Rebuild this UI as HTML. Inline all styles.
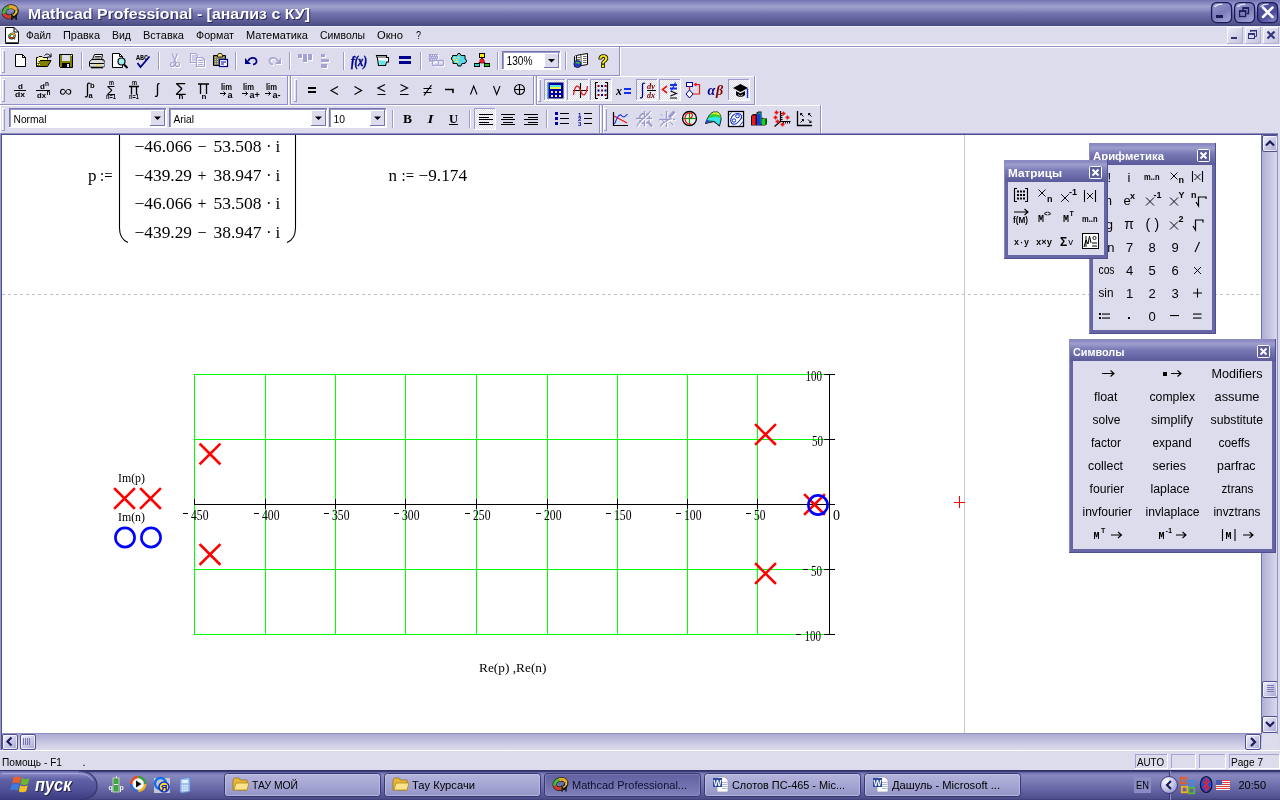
<!DOCTYPE html>
<html lang="ru"><head><meta charset="utf-8"><title>Mathcad Professional - [анализ с КУ]</title>
<style>
html,body{margin:0;padding:0;width:1280px;height:800px;overflow:hidden;background:#DCDCEC;font-family:'Liberation Sans', sans-serif;}
svg{display:block;position:absolute;left:0;top:0;will-change:transform}
text{white-space:pre}
</style></head><body>
<svg width="1280" height="800" viewBox="0 0 1280 800">
<defs>
<linearGradient id="gTitle" x1="0" y1="0" x2="0" y2="1">
<stop offset="0" stop-color="#7272B2"/><stop offset="0.10" stop-color="#8686C0"/>
<stop offset="0.25" stop-color="#A0A0CC"/><stop offset="0.36" stop-color="#9292C4"/>
<stop offset="0.50" stop-color="#7676B2"/><stop offset="0.70" stop-color="#6464A0"/>
<stop offset="0.90" stop-color="#54548C"/><stop offset="1" stop-color="#484880"/></linearGradient>
<linearGradient id="gCap" x1="0" y1="0" x2="0.6" y2="1"><stop offset="0" stop-color="#B4B4E0"/><stop offset="0.25" stop-color="#8C8CC6"/><stop offset="0.6" stop-color="#7C7CBA"/><stop offset="1" stop-color="#9C9CD0"/></linearGradient>
<linearGradient id="gCapX" x1="0" y1="0" x2="0.6" y2="1"><stop offset="0" stop-color="#9090CC"/><stop offset="0.3" stop-color="#5050A0"/><stop offset="0.7" stop-color="#4C4C98"/><stop offset="1" stop-color="#7878BC"/></linearGradient>
<linearGradient id="gMdi" x1="0" y1="0" x2="1" y2="1"><stop offset="0" stop-color="#ECECF6"/><stop offset="1" stop-color="#C0C0DE"/></linearGradient>
<pattern id="dith" width="2" height="2" patternUnits="userSpaceOnUse"><rect width="2" height="2" fill="#DCDCEC"/><rect width="1" height="1" fill="#FFFFFF"/><rect x="1" y="1" width="1" height="1" fill="#FFFFFF"/></pattern>
<linearGradient id="gHTrack" x1="0" y1="0" x2="0" y2="1"><stop offset="0" stop-color="#A8A8D2"/><stop offset="0.5" stop-color="#C4C4E0"/><stop offset="1" stop-color="#DCDCEE"/></linearGradient>
<linearGradient id="gVTrack" x1="0" y1="0" x2="1" y2="0"><stop offset="0" stop-color="#ACACD4"/><stop offset="0.5" stop-color="#C4C4E0"/><stop offset="1" stop-color="#DCDCEE"/></linearGradient>
<linearGradient id="gBtn" x1="0" y1="0" x2="1" y2="1"><stop offset="0" stop-color="#F4F4FC"/><stop offset="0.5" stop-color="#CCCCE6"/><stop offset="1" stop-color="#A4A4D0"/></linearGradient>
<linearGradient id="gTask" x1="0" y1="0" x2="0" y2="1"><stop offset="0" stop-color="#2E2E64"/><stop offset="0.05" stop-color="#3A3A74"/><stop offset="0.09" stop-color="#7070B0"/><stop offset="0.17" stop-color="#8888C0"/><stop offset="0.35" stop-color="#7C7CB6"/><stop offset="0.7" stop-color="#6262A2"/><stop offset="0.95" stop-color="#4E4E8C"/><stop offset="1" stop-color="#3C3C74"/></linearGradient>
<linearGradient id="gTBtn" x1="0" y1="0" x2="0" y2="1"><stop offset="0" stop-color="#B4B4DC"/><stop offset="0.5" stop-color="#A6A6D4"/><stop offset="1" stop-color="#9292C6"/></linearGradient>
<linearGradient id="gTBtnA" x1="0" y1="0" x2="0" y2="1"><stop offset="0" stop-color="#6060A0"/><stop offset="0.5" stop-color="#7070AE"/><stop offset="1" stop-color="#8080BA"/></linearGradient>
<linearGradient id="gStart" x1="0" y1="0" x2="0" y2="1"><stop offset="0" stop-color="#6C6CB0"/><stop offset="0.12" stop-color="#8282C0"/><stop offset="0.3" stop-color="#6060A6"/><stop offset="0.7" stop-color="#4E4E96"/><stop offset="1" stop-color="#3A3A7E"/></linearGradient>
<radialGradient id="gRound" cx="0.35" cy="0.3" r="0.8"><stop offset="0" stop-color="#FFFFFF"/><stop offset="0.6" stop-color="#C0C0E4"/><stop offset="1" stop-color="#8888C4"/></radialGradient>
<linearGradient id="gPalT" x1="0" y1="0" x2="0" y2="1"><stop offset="0" stop-color="#8686C0"/><stop offset="0.18" stop-color="#9E9ECE"/><stop offset="0.45" stop-color="#7A7AB6"/><stop offset="1" stop-color="#5A5A9A"/></linearGradient>
</defs>
<rect x="0" y="0" width="1280" height="800" fill="#DCDCEC" />
<rect x="0" y="0" width="1280" height="26" fill="url(#gTitle)" />
<text x="29" y="20" font-family="'Liberation Sans', sans-serif" font-size="14" font-weight="bold" font-style="normal" fill="#2A2A5C" text-anchor="start" textLength="282" lengthAdjust="spacingAndGlyphs" >Mathcad Professional - [анализ с КУ]</text>
<text x="28" y="19" font-family="'Liberation Sans', sans-serif" font-size="14" font-weight="bold" font-style="normal" fill="#FFFFFF" text-anchor="start" textLength="282" lengthAdjust="spacingAndGlyphs" >Mathcad Professional - [анализ с КУ]</text>
<rect x="0" y="26" width="1280" height="1" fill="#ECECF6" />
<text x="26" y="39" font-family="'Liberation Sans', sans-serif" font-size="11" font-weight="normal" font-style="normal" fill="#000" text-anchor="start" textLength="25" lengthAdjust="spacingAndGlyphs" >Файл</text>
<text x="63" y="39" font-family="'Liberation Sans', sans-serif" font-size="11" font-weight="normal" font-style="normal" fill="#000" text-anchor="start" textLength="37" lengthAdjust="spacingAndGlyphs" >Правка</text>
<text x="112" y="39" font-family="'Liberation Sans', sans-serif" font-size="11" font-weight="normal" font-style="normal" fill="#000" text-anchor="start" textLength="19" lengthAdjust="spacingAndGlyphs" >Вид</text>
<text x="143" y="39" font-family="'Liberation Sans', sans-serif" font-size="11" font-weight="normal" font-style="normal" fill="#000" text-anchor="start" textLength="41" lengthAdjust="spacingAndGlyphs" >Вставка</text>
<text x="196" y="39" font-family="'Liberation Sans', sans-serif" font-size="11" font-weight="normal" font-style="normal" fill="#000" text-anchor="start" textLength="38" lengthAdjust="spacingAndGlyphs" >Формат</text>
<text x="246" y="39" font-family="'Liberation Sans', sans-serif" font-size="11" font-weight="normal" font-style="normal" fill="#000" text-anchor="start" textLength="62" lengthAdjust="spacingAndGlyphs" >Математика</text>
<text x="320" y="39" font-family="'Liberation Sans', sans-serif" font-size="11" font-weight="normal" font-style="normal" fill="#000" text-anchor="start" textLength="45" lengthAdjust="spacingAndGlyphs" >Символы</text>
<text x="377" y="39" font-family="'Liberation Sans', sans-serif" font-size="11" font-weight="normal" font-style="normal" fill="#000" text-anchor="start" textLength="26" lengthAdjust="spacingAndGlyphs" >Окно</text>
<text x="416" y="39" font-family="'Liberation Sans', sans-serif" font-size="11" font-weight="normal" font-style="normal" fill="#000" text-anchor="start" textLength="5" lengthAdjust="spacingAndGlyphs" >?</text>
<rect x="0" y="44" width="1280" height="1" fill="#F4F4FA" />
<rect x="0" y="45" width="1280" height="1" fill="#FFFFFF" />
<rect x="0" y="46" width="1280" height="1" fill="#9090C4" />
<rect x="0" y="47" width="1280" height="1" fill="#FFFFFF" />
<rect x="0" y="47" width="619" height="1" fill="#FFFFFF" />
<rect x="0" y="47" width="1" height="28" fill="#FFFFFF" />
<rect x="0" y="75" width="620" height="1" fill="#9090C4" />
<rect x="619" y="47" width="1" height="28" fill="#9090C4" />
<rect x="620" y="47" width="1" height="29" fill="#FFFFFF" />
<rect x="2" y="50" width="1" height="23" fill="#FFFFFF" />
<rect x="3" y="50" width="1" height="23" fill="#DCDCEC" />
<rect x="4" y="50" width="1" height="23" fill="#9C9CCC" />
<rect x="2" y="50" width="3" height="1" fill="#FFFFFF" />
<rect x="2" y="72" width="3" height="1" fill="#9C9CCC" />
<rect x="0" y="76" width="287" height="1" fill="#FFFFFF" />
<rect x="0" y="76" width="1" height="28" fill="#FFFFFF" />
<rect x="0" y="104" width="288" height="1" fill="#9090C4" />
<rect x="287" y="76" width="1" height="28" fill="#9090C4" />
<rect x="288" y="76" width="1" height="29" fill="#FFFFFF" />
<rect x="2" y="79" width="1" height="23" fill="#FFFFFF" />
<rect x="3" y="79" width="1" height="23" fill="#DCDCEC" />
<rect x="4" y="79" width="1" height="23" fill="#9C9CCC" />
<rect x="2" y="79" width="3" height="1" fill="#FFFFFF" />
<rect x="2" y="101" width="3" height="1" fill="#9C9CCC" />
<rect x="290" y="76" width="243" height="1" fill="#FFFFFF" />
<rect x="290" y="76" width="1" height="28" fill="#9090C4" />
<rect x="291" y="76" width="1" height="28" fill="#FFFFFF" />
<rect x="290" y="104" width="244" height="1" fill="#9090C4" />
<rect x="533" y="76" width="1" height="28" fill="#9090C4" />
<rect x="534" y="76" width="1" height="29" fill="#FFFFFF" />
<rect x="294" y="79" width="1" height="23" fill="#FFFFFF" />
<rect x="295" y="79" width="1" height="23" fill="#DCDCEC" />
<rect x="296" y="79" width="1" height="23" fill="#9C9CCC" />
<rect x="294" y="79" width="3" height="1" fill="#FFFFFF" />
<rect x="294" y="101" width="3" height="1" fill="#9C9CCC" />
<rect x="536" y="76" width="218" height="1" fill="#FFFFFF" />
<rect x="536" y="76" width="1" height="28" fill="#9090C4" />
<rect x="537" y="76" width="1" height="28" fill="#FFFFFF" />
<rect x="536" y="104" width="219" height="1" fill="#9090C4" />
<rect x="754" y="76" width="1" height="28" fill="#9090C4" />
<rect x="755" y="76" width="1" height="29" fill="#FFFFFF" />
<rect x="538" y="79" width="1" height="23" fill="#FFFFFF" />
<rect x="539" y="79" width="1" height="23" fill="#DCDCEC" />
<rect x="540" y="79" width="1" height="23" fill="#9C9CCC" />
<rect x="538" y="79" width="3" height="1" fill="#FFFFFF" />
<rect x="538" y="101" width="3" height="1" fill="#9C9CCC" />
<rect x="0" y="105" width="599" height="1" fill="#FFFFFF" />
<rect x="0" y="105" width="1" height="28" fill="#FFFFFF" />
<rect x="0" y="133" width="600" height="1" fill="#9090C4" />
<rect x="599" y="105" width="1" height="28" fill="#9090C4" />
<rect x="600" y="105" width="1" height="29" fill="#FFFFFF" />
<rect x="2" y="108" width="1" height="23" fill="#FFFFFF" />
<rect x="3" y="108" width="1" height="23" fill="#DCDCEC" />
<rect x="4" y="108" width="1" height="23" fill="#9C9CCC" />
<rect x="2" y="108" width="3" height="1" fill="#FFFFFF" />
<rect x="2" y="130" width="3" height="1" fill="#9C9CCC" />
<rect x="602" y="105" width="218" height="1" fill="#FFFFFF" />
<rect x="602" y="105" width="1" height="28" fill="#9090C4" />
<rect x="603" y="105" width="1" height="28" fill="#FFFFFF" />
<rect x="602" y="133" width="219" height="1" fill="#9090C4" />
<rect x="820" y="105" width="1" height="28" fill="#9090C4" />
<rect x="821" y="105" width="1" height="29" fill="#FFFFFF" />
<rect x="604" y="108" width="1" height="23" fill="#FFFFFF" />
<rect x="605" y="108" width="1" height="23" fill="#DCDCEC" />
<rect x="606" y="108" width="1" height="23" fill="#9C9CCC" />
<rect x="604" y="108" width="3" height="1" fill="#FFFFFF" />
<rect x="604" y="130" width="3" height="1" fill="#9C9CCC" />
<rect x="0" y="133" width="1278" height="1" fill="#8C8CC0" />
<rect x="0" y="134" width="1278" height="1" fill="#50508C" />
<rect x="81" y="52" width="1" height="18" fill="#9C9CCC" />
<rect x="82" y="52" width="1" height="18" fill="#FFFFFF" />
<rect x="158" y="52" width="1" height="18" fill="#9C9CCC" />
<rect x="159" y="52" width="1" height="18" fill="#FFFFFF" />
<rect x="235" y="52" width="1" height="18" fill="#9C9CCC" />
<rect x="236" y="52" width="1" height="18" fill="#FFFFFF" />
<rect x="289" y="52" width="1" height="18" fill="#9C9CCC" />
<rect x="290" y="52" width="1" height="18" fill="#FFFFFF" />
<rect x="343" y="52" width="1" height="18" fill="#9C9CCC" />
<rect x="344" y="52" width="1" height="18" fill="#FFFFFF" />
<rect x="420" y="52" width="1" height="18" fill="#9C9CCC" />
<rect x="421" y="52" width="1" height="18" fill="#FFFFFF" />
<rect x="497" y="52" width="1" height="18" fill="#9C9CCC" />
<rect x="498" y="52" width="1" height="18" fill="#FFFFFF" />
<rect x="565" y="52" width="1" height="18" fill="#9C9CCC" />
<rect x="566" y="52" width="1" height="18" fill="#FFFFFF" />
<rect x="392" y="110" width="1" height="18" fill="#9C9CCC" />
<rect x="393" y="110" width="1" height="18" fill="#FFFFFF" />
<rect x="469" y="110" width="1" height="18" fill="#9C9CCC" />
<rect x="470" y="110" width="1" height="18" fill="#FFFFFF" />
<rect x="546" y="110" width="1" height="18" fill="#9C9CCC" />
<rect x="547" y="110" width="1" height="18" fill="#FFFFFF" />
<rect x="2" y="135" width="1259" height="599" fill="#FFFFFF" />
<rect x="0" y="134" width="1" height="617" fill="#9898C8" />
<rect x="1" y="134" width="1" height="617" fill="#50508C" />
<rect x="964" y="135" width="1" height="599" fill="#C8C8C8" />
<rect x="1211.6" y="2.6" width="20" height="20" rx="5" fill="url(#gCap)" stroke="#1A1A58" stroke-width="1.3"/>
<path d="M1215 6.500C1217 4.500 1220 4.200 1222 4.200" fill="none" stroke="#FFFFFF" stroke-opacity="0.8" stroke-width="1.2" stroke-linecap="round"/>
<rect x="1234.6" y="2.6" width="20" height="20" rx="5" fill="url(#gCap)" stroke="#1A1A58" stroke-width="1.3"/>
<path d="M1238 6.500C1240 4.500 1243 4.200 1245 4.200" fill="none" stroke="#FFFFFF" stroke-opacity="0.8" stroke-width="1.2" stroke-linecap="round"/>
<rect x="1257.6" y="2.6" width="20" height="20" rx="5" fill="url(#gCapX)" stroke="#1A1A58" stroke-width="1.3"/>
<path d="M1261 6.500C1263 4.500 1266 4.200 1268 4.200" fill="none" stroke="#FFFFFF" stroke-opacity="0.8" stroke-width="1.2" stroke-linecap="round"/>
<rect x="1216" y="15" width="7" height="3" fill="#1A1A58" />
<path d="M1243 10V8H1248.500V13.500H1246.500" fill="none" stroke="#1A1A58" stroke-width="1.3" />
<rect x="1242.5" y="7.3" width="6.5" height="1.4" fill="#1A1A58" />
<rect x="1239.600" y="11" width="6" height="5.500" fill="none" stroke="#1A1A58" stroke-width="1.3"/>
<rect x="1239" y="10.3" width="7.3" height="1.5" fill="#1A1A58" />
<path d="M1263 7.500L1272.500 17M1272.500 7.500L1263 17" fill="none" stroke="#FFFFFF" stroke-width="2.5" stroke-linecap="round"/>
<rect x="1227" y="27" width="16" height="17" fill="url(#gMdi)" />
<rect x="1227" y="27" width="16" height="1" fill="#F8F8FC" />
<rect x="1227" y="27" width="1" height="17" fill="#F8F8FC" />
<rect x="1227" y="43" width="16" height="1" fill="#B0B0D4" />
<rect x="1242" y="27" width="1" height="17" fill="#B0B0D4" />
<rect x="1245" y="27" width="16" height="17" fill="url(#gMdi)" />
<rect x="1245" y="27" width="16" height="1" fill="#F8F8FC" />
<rect x="1245" y="27" width="1" height="17" fill="#F8F8FC" />
<rect x="1245" y="43" width="16" height="1" fill="#B0B0D4" />
<rect x="1260" y="27" width="1" height="17" fill="#B0B0D4" />
<rect x="1263" y="27" width="16" height="17" fill="url(#gMdi)" />
<rect x="1263" y="27" width="16" height="1" fill="#F8F8FC" />
<rect x="1263" y="27" width="1" height="17" fill="#F8F8FC" />
<rect x="1263" y="43" width="16" height="1" fill="#B0B0D4" />
<rect x="1278" y="27" width="1" height="17" fill="#B0B0D4" />
<rect x="1231" y="37" width="6" height="2" fill="#34347A" />
<rect x="1248.500" y="33.500" width="6" height="5" fill="none" stroke="#34347A" stroke-width="1"/>
<rect x="1248" y="33" width="7" height="2" fill="#34347A" />
<path d="M1250.500 32V30.500H1256.500V36.500H1255" fill="none" stroke="#34347A" stroke-width="1" />
<rect x="1250" y="30" width="7" height="1.5" fill="#34347A" />
<path d="M1267.500 31.500L1274.500 38.500M1274.500 31.500L1267.500 38.500" fill="none" stroke="#34347A" stroke-width="2.2" />
<g transform="translate(10.2 11.8) scale(1.08) rotate(-18)"><ellipse cx="0" cy="0" rx="5.900" ry="4.600" fill="none" stroke="#181818" stroke-width="4.400"/><path d="M-5.900 0A5.900 4.600 0 0 1 0 -4.600" fill="none" stroke="#48B83C" stroke-width="3.200"/><path d="M0 -4.600A5.900 4.600 0 0 1 5.900 0" fill="none" stroke="#E8A828" stroke-width="3.200"/><path d="M-5.900 0A5.900 4.600 0 0 0 -1 4.550" fill="none" stroke="#D83828" stroke-width="3.200"/><path d="M-1 4.550A5.900 4.600 0 0 0 2.500 4.200" fill="none" stroke="#E8D030" stroke-width="3.200"/><path d="M2.500 4.200A5.900 4.600 0 0 0 5.900 0" fill="none" stroke="#D8C040" stroke-width="2"/></g>
<g transform="translate(10.2 11.8) scale(1.08)"><path d="M1.500 7.500V3L3.500 5.500L5.500 3V7.500" fill="none" stroke="#101010" stroke-width="1.400"/></g>
<path d="M5.500 27.500H14L18.500 32V43.500H5.500Z" fill="#FFFFFF" stroke="#000" stroke-width="1" />
<path d="M14 27.500V32H18.500" fill="none" stroke="#000" stroke-width="1" />
<rect x="5" y="42" width="14" height="1" fill="#505050" />
<g transform="translate(12 36) scale(0.48) rotate(-18)"><ellipse cx="0" cy="0" rx="5.900" ry="4.600" fill="none" stroke="#181818" stroke-width="4.400"/><path d="M-5.900 0A5.900 4.600 0 0 1 0 -4.600" fill="none" stroke="#48B83C" stroke-width="3.200"/><path d="M0 -4.600A5.900 4.600 0 0 1 5.900 0" fill="none" stroke="#E8A828" stroke-width="3.200"/><path d="M-5.900 0A5.900 4.600 0 0 0 -1 4.550" fill="none" stroke="#D83828" stroke-width="3.200"/><path d="M-1 4.550A5.900 4.600 0 0 0 2.500 4.200" fill="none" stroke="#E8D030" stroke-width="3.200"/><path d="M2.500 4.200A5.900 4.600 0 0 0 5.900 0" fill="none" stroke="#D8C040" stroke-width="2"/></g>
<g transform="translate(12 36) scale(0.48)"><path d="M1.500 7.500V3L3.500 5.500L5.500 3V7.500" fill="none" stroke="#101010" stroke-width="1.400"/></g>
<path d="M15.500 54.500H22.500L25.500 57.500V66.500H15.500Z" fill="#FFFFFF" stroke="#000" stroke-width="1" />
<path d="M22.500 54.500V57.500H25.500" fill="none" stroke="#000" stroke-width="1" />
<path d="M36.500 66.500V57.500H38L39 56.500H42L43 57.500H47.500V59.500" fill="#FFFF9C" stroke="#000" stroke-width="1" />
<path d="M36.500 66.500L39.500 60.500H51L47.500 66.500Z" fill="#808000" stroke="#000" stroke-width="1" />
<rect x="38" y="58" width="1" height="1" fill="#FFFFFF" />
<rect x="37" y="60" width="1" height="1" fill="#FFFFFF" />
<rect x="39" y="60" width="1" height="1" fill="#FFFFFF" />
<rect x="38" y="62" width="1" height="1" fill="#FFFFFF" />
<rect x="37" y="64" width="1" height="1" fill="#FFFFFF" />
<rect x="39" y="64" width="1" height="1" fill="#FFFFFF" />
<path d="M44.500 55.500C46 53.500 49 53.500 50.500 56.500" fill="none" stroke="#000" stroke-width="1" />
<path d="M51 53.500V57H47.500" fill="none" stroke="#000" stroke-width="1" />
<path d="M59.500 54.500H72.500V67.500H60.500L59.500 66.500Z" fill="#808000" stroke="#000" stroke-width="1" />
<rect x="62" y="55" width="8" height="6" fill="#DCDCEC" />
<rect x="62" y="63" width="8" height="4" fill="#000000" />
<rect x="67" y="64" width="2" height="3" fill="#DCDCEC" />
<rect x="71" y="55" width="1" height="1" fill="#FFFFFF" />
<path d="M92.500 59.500L94.500 54.500H102.500L101.500 59.500" fill="#FFFFFF" stroke="#000" stroke-width="1" />
<path d="M95 56.500H101M94.500 58H100.500" fill="none" stroke="#000" stroke-width="0.8" />
<path d="M89.500 61.500L92 59.500H103.500L104.500 61.500V66L103 67.500H91L89.500 66Z" fill="#DCDCDC" stroke="#000" stroke-width="1" />
<path d="M89.500 63.500H104.500" fill="none" stroke="#000" stroke-width="1" />
<rect x="96" y="64.5" width="4" height="1" fill="#F0E000" />
<path d="M91 67.500H103" fill="none" stroke="#000" stroke-width="1.6" />
<path d="M102 60L104.500 62V66" fill="none" stroke="#808080" stroke-width="1" />
<path d="M112.500 53.500H119.500L122.500 56.500V67.500H112.500Z" fill="#FFFFFF" stroke="#000" stroke-width="1" />
<path d="M119.500 53.500V56.500H122.500" fill="none" stroke="#000" stroke-width="1" />
<circle cx="121.500" cy="61.500" r="3.500" fill="#9CF0F0" stroke="#000" stroke-width="1.2"/>
<path d="M124 64.500L127.500 68" fill="none" stroke="#000" stroke-width="2" />
<text x="136" y="59.5" font-family="'Liberation Mono', monospace" font-size="6.5" font-weight="bold" font-style="normal" fill="#000" text-anchor="start" textLength="12" lengthAdjust="spacingAndGlyphs" >ABC</text>
<path d="M137.500 63L140.500 67L149.500 56.500" fill="none" stroke="#00008C" stroke-width="1.8" />
<path d="M172 53.500L176 63M177.500 53.500L173.500 63" transform="translate(1 1)" fill="none" stroke="#FFFFFF" stroke-width="1.2"/>
<path d="M172 53.500L176 63M177.500 53.500L173.500 63" fill="none" stroke="#A4A4D4" stroke-width="1.2"/>
<circle cx="172.500" cy="64.500" r="2" fill="none" stroke="#FFFFFF" stroke-width="1.2" transform="translate(1 1)"/><circle cx="177.500" cy="64.500" r="2" fill="none" stroke="#FFFFFF" stroke-width="1.2" transform="translate(1 1)"/>
<circle cx="172.500" cy="64.500" r="2" fill="none" stroke="#A4A4D4" stroke-width="1.2"/><circle cx="177.500" cy="64.500" r="2" fill="none" stroke="#A4A4D4" stroke-width="1.2"/>
<path d="M190.500 53.500H195.500L197.500 55.500V62.500H190.500Z" transform="translate(1 1)" fill="none" stroke="#FFFFFF" stroke-width="1.2"/>
<path d="M190.500 53.500H195.500L197.500 55.500V62.500H190.500Z" fill="none" stroke="#A4A4D4" stroke-width="1.2"/>
<path d="M192 56H196M192 58H196M192 60H196" transform="translate(1 1)" fill="none" stroke="#FFFFFF" stroke-width="0.8"/>
<path d="M192 56H196M192 58H196M192 60H196" fill="none" stroke="#A4A4D4" stroke-width="0.8"/>
<path d="M196.500 57.500H202.500L204.500 59.500V66.500H196.500Z" transform="translate(1 1)" fill="none" stroke="#FFFFFF" stroke-width="1.2"/>
<path d="M196.500 57.500H202.500L204.500 59.500V66.500H196.500Z" fill="none" stroke="#A4A4D4" stroke-width="1.2"/>
<path d="M198 60.500H203M198 62.500H203M198 64.500H203" transform="translate(1 1)" fill="none" stroke="#FFFFFF" stroke-width="0.8"/>
<path d="M198 60.500H203M198 62.500H203M198 64.500H203" fill="none" stroke="#A4A4D4" stroke-width="0.8"/>
<path d="M213.500 55.500H225.500V65.500H213.500Z" fill="#808060" stroke="#000" stroke-width="1" />
<rect x="215" y="57" width="1" height="1" fill="#C8C880" />
<rect x="217" y="57" width="1" height="1" fill="#C8C880" />
<rect x="219" y="57" width="1" height="1" fill="#C8C880" />
<rect x="221" y="57" width="1" height="1" fill="#C8C880" />
<rect x="223" y="57" width="1" height="1" fill="#C8C880" />
<rect x="215" y="59" width="1" height="1" fill="#C8C880" />
<rect x="217" y="59" width="1" height="1" fill="#C8C880" />
<rect x="219" y="59" width="1" height="1" fill="#C8C880" />
<rect x="221" y="59" width="1" height="1" fill="#C8C880" />
<rect x="223" y="59" width="1" height="1" fill="#C8C880" />
<rect x="215" y="61" width="1" height="1" fill="#C8C880" />
<rect x="217" y="61" width="1" height="1" fill="#C8C880" />
<rect x="219" y="61" width="1" height="1" fill="#C8C880" />
<rect x="221" y="61" width="1" height="1" fill="#C8C880" />
<rect x="223" y="61" width="1" height="1" fill="#C8C880" />
<rect x="215" y="63" width="1" height="1" fill="#C8C880" />
<rect x="217" y="63" width="1" height="1" fill="#C8C880" />
<rect x="219" y="63" width="1" height="1" fill="#C8C880" />
<rect x="221" y="63" width="1" height="1" fill="#C8C880" />
<rect x="223" y="63" width="1" height="1" fill="#C8C880" />
<path d="M217.500 55.500L218.500 53.500H221.500L222.500 55.500V57H217.500Z" fill="#F8E060" stroke="#000" stroke-width="0.8" />
<rect x="219.5" y="59.5" width="8" height="7" fill="#FFFFFF" stroke="#00008C" stroke-width="1.2"/>
<path d="M221 62H226M221 64H224" fill="none" stroke="#00008C" stroke-width="1.2" />
<path d="M248.500 61C249 57.500 255.500 56.500 256.500 60.500C257 63 255 64.500 253 64.500" fill="none" stroke="#00008C" stroke-width="1.7" />
<path d="M245 58V64H251Z" fill="#00008C" stroke="none" stroke-width="1" />
<path d="M277.500 61C277 57.500 270.500 56.500 269.500 60.500C269 63 271 64.500 273 64.500" transform="translate(1 1)" fill="none" stroke="#FFFFFF" stroke-width="1.6"/>
<path d="M277.500 61C277 57.500 270.500 56.500 269.500 60.500C269 63 271 64.500 273 64.500" fill="none" stroke="#A4A4D4" stroke-width="1.6"/>
<path d="M281 58V64H275Z" fill="#FFFFFF" transform="translate(1 1)"/><path d="M281 58V64H275Z" fill="#A4A4D4"/>
<rect x="299" y="55" width="4" height="4" fill="#FFFFFF" />
<rect x="298" y="54" width="4" height="4" fill="#A4A4D4" />
<rect x="304" y="55" width="4" height="8" fill="#FFFFFF" />
<rect x="303" y="54" width="4" height="8" fill="#A4A4D4" />
<rect x="309" y="55" width="4" height="6" fill="#FFFFFF" />
<rect x="308" y="54" width="4" height="6" fill="#A4A4D4" />
<rect x="322" y="55" width="4" height="3" fill="#FFFFFF" />
<rect x="321" y="54" width="4" height="3" fill="#A4A4D4" />
<rect x="322" y="60" width="8" height="3" fill="#FFFFFF" />
<rect x="321" y="59" width="8" height="3" fill="#A4A4D4" />
<rect x="322" y="65" width="6" height="4" fill="#FFFFFF" />
<rect x="321" y="64" width="6" height="4" fill="#A4A4D4" />
<text x="351" y="65.5" font-family="'Liberation Serif', serif" font-size="14" font-weight="bold" font-style="italic" fill="#00008C" text-anchor="start" textLength="16" lengthAdjust="spacingAndGlyphs" stroke="#00008C" stroke-width="0.5">f(x)</text>
<path d="M376.500 55.500H386.500V57.500H388.500V62H386.500L385.500 65.500H378.500L377.500 58.500Z" fill="#FFFFFF" stroke="#000" stroke-width="1.1" />
<path d="M379 60.500H385.500L385 65H379.500Z" fill="#60E8E8" stroke="none" stroke-width="1" />
<path d="M378 57H386" fill="none" stroke="#000" stroke-width="0.8" />
<rect x="399" y="56" width="12" height="3" fill="#00008C" />
<rect x="399" y="61" width="12" height="3" fill="#00008C" />
<rect x="430" y="55" width="9" height="8" fill="#FFFFFF" />
<rect x="429" y="54" width="9" height="8" fill="#A4A4D4" />
<rect x="431" y="55" width="1" height="1" fill="#E4E4F4" />
<rect x="433" y="55" width="1" height="1" fill="#E4E4F4" />
<rect x="435" y="55" width="1" height="1" fill="#E4E4F4" />
<rect x="437" y="55" width="1" height="1" fill="#E4E4F4" />
<rect x="430" y="57" width="1" height="1" fill="#E4E4F4" />
<rect x="432" y="57" width="1" height="1" fill="#E4E4F4" />
<rect x="434" y="57" width="1" height="1" fill="#E4E4F4" />
<rect x="436" y="57" width="1" height="1" fill="#E4E4F4" />
<rect x="431" y="59" width="1" height="1" fill="#E4E4F4" />
<rect x="433" y="59" width="1" height="1" fill="#E4E4F4" />
<rect x="435" y="59" width="1" height="1" fill="#E4E4F4" />
<rect x="437" y="59" width="1" height="1" fill="#E4E4F4" />
<rect x="430" y="61" width="1" height="1" fill="#E4E4F4" />
<rect x="432" y="61" width="1" height="1" fill="#E4E4F4" />
<rect x="434" y="61" width="1" height="1" fill="#E4E4F4" />
<rect x="436" y="61" width="1" height="1" fill="#E4E4F4" />
<path d="M433.500 60.500H437.500C439 60.500 439 65.500 437.500 65.500H433.500C432 65.500 432 60.500 433.500 60.500Z" transform="translate(1 1)" fill="none" stroke="#FFFFFF" stroke-width="1.3"/>
<path d="M433.500 60.500H437.500C439 60.500 439 65.500 437.500 65.500H433.500C432 65.500 432 60.500 433.500 60.500Z" fill="none" stroke="#A4A4D4" stroke-width="1.3"/>
<path d="M438.500 60.500H442.500C444 60.500 444 65.500 442.500 65.500H438.500" transform="translate(1 1)" fill="none" stroke="#FFFFFF" stroke-width="1.3"/>
<path d="M438.500 60.500H442.500C444 60.500 444 65.500 442.500 65.500H438.500" fill="none" stroke="#A4A4D4" stroke-width="1.3"/>
<path d="M452.500 55.500H457L458 53.500H460L461 55.500H465V59L466.500 60V62L465 62.500V63.500H462L461 66H458L457 63.500H453V60.500L451.500 59.500V57.500L452.500 57Z" fill="#58D8E8" stroke="#000" stroke-width="1" />
<rect x="454" y="57" width="1.5" height="1.5" fill="#F8F060" />
<rect x="456" y="59" width="1.5" height="1.5" fill="#F8F060" />
<rect x="455" y="61" width="1.5" height="1.5" fill="#F8F060" />
<rect x="458" y="57" width="1.5" height="1.5" fill="#F8F060" />
<rect x="453" y="59" width="1.5" height="1.5" fill="#F8F060" />
<rect x="457" y="61" width="1.5" height="1.5" fill="#F8F060" />
<path d="M482 57V61M482 61L477 65M482 61L487 65" fill="none" stroke="#000" stroke-width="1.5" />
<rect x="479.5" y="53.5" width="5" height="4" fill="#F8F000" stroke="#000" stroke-width="1"/>
<circle cx="482" cy="61" r="2.300" fill="#F02020" stroke="#800000" stroke-width="0.6"/>
<rect x="474.5" y="63.5" width="5" height="3" fill="#00E0E0" stroke="#000" stroke-width="1"/>
<rect x="484.5" y="63.5" width="5" height="3" fill="#00D000" stroke="#000" stroke-width="1"/>
<rect x="502" y="51" width="59" height="19" fill="#FFFFFF" />
<rect x="502" y="51" width="59" height="1" fill="#7474AE" />
<rect x="502" y="51" width="1" height="19" fill="#7474AE" />
<rect x="503" y="52" width="57" height="1" fill="#9C9CCC" />
<rect x="503" y="52" width="1" height="17" fill="#9C9CCC" />
<rect x="502" y="69" width="59" height="1" fill="#FFFFFF" />
<rect x="560" y="51" width="1" height="19" fill="#FFFFFF" />
<rect x="544" y="53" width="15" height="15" fill="#DCDCEC" />
<rect x="544" y="53" width="15" height="1" fill="#FFFFFF" />
<rect x="544" y="53" width="1" height="15" fill="#FFFFFF" />
<rect x="544" y="67" width="15" height="1" fill="#7474AE" />
<rect x="558" y="53" width="1" height="15" fill="#7474AE" />
<path d="M548 59.0H555L551.5 62.5Z" fill="#000" stroke="none" stroke-width="1" />
<text x="506.5" y="64.5" font-family="'Liberation Sans', sans-serif" font-size="12" font-weight="normal" font-style="normal" fill="#000" text-anchor="start" textLength="26" lengthAdjust="spacingAndGlyphs" >130%</text>
<path d="M576.500 55.500L581 54.500L581.500 65.500L577 66.500Z" fill="#FFFFFF" stroke="#000" stroke-width="1" />
<path d="M581.500 54.500L587.500 53.500V64.500L581.500 65.500" fill="#FFFFFF" stroke="#000" stroke-width="1" />
<path d="M583 56.500H586.500M583 58.500H586.500M583 60.500H586.500M583 62.500H586.500" fill="none" stroke="#404040" stroke-width="0.8" />
<path d="M575.500 55.500L574.500 56.500V66.500L577 66.500" fill="none" stroke="#000" stroke-width="1" />
<path d="M577.500 57.500H580M577.500 59.500H580" fill="none" stroke="#404040" stroke-width="0.8" />
<circle cx="577.500" cy="64" r="3.600" fill="#2838C8" stroke="#101040" stroke-width="0.8"/>
<path d="M575.500 63C577 61.500 578.500 64 580 62.500" fill="none" stroke="#30C030" stroke-width="1.4" />
<text x="598.5" y="67" font-family="'Liberation Sans', sans-serif" font-size="16" font-weight="bold" font-style="normal" fill="#F8E800" text-anchor="start" stroke="#000" stroke-width="1.7" paint-order="stroke" stroke-linejoin="round">?</text>
<text x="18" y="89" font-family="'Liberation Sans', sans-serif" font-size="8" font-weight="bold" font-style="normal" fill="#000" text-anchor="start" >d</text>
<rect x="14" y="90" width="12" height="1" fill="#000" />
<text x="15" y="97" font-family="'Liberation Sans', sans-serif" font-size="8" font-weight="bold" font-style="normal" fill="#000" text-anchor="start" textLength="10" lengthAdjust="spacingAndGlyphs" >dx</text>
<text x="40" y="89" font-family="'Liberation Sans', sans-serif" font-size="8" font-weight="bold" font-style="normal" fill="#000" text-anchor="start" >d</text>
<text x="45" y="86" font-family="'Liberation Sans', sans-serif" font-size="6.5" font-weight="bold" font-style="normal" fill="#000" text-anchor="start" >n</text>
<rect x="36" y="90" width="14" height="1" fill="#000" />
<text x="37" y="98" font-family="'Liberation Sans', sans-serif" font-size="8" font-weight="bold" font-style="normal" fill="#000" text-anchor="start" textLength="9" lengthAdjust="spacingAndGlyphs" >dx</text>
<text x="46.5" y="95" font-family="'Liberation Sans', sans-serif" font-size="6.5" font-weight="bold" font-style="normal" fill="#000" text-anchor="start" >n</text>
<text x="59" y="96" font-family="'Liberation Sans', sans-serif" font-size="15" font-weight="normal" font-style="normal" fill="#000" text-anchor="start" textLength="13" lengthAdjust="spacingAndGlyphs" >∞</text>
<path d="M90 83.500C88.500 82.500 87.500 83.500 87.500 85V95C87.500 96.500 86.500 97.500 85 96.500" fill="none" stroke="#000" stroke-width="1.3" />
<text x="90" y="88" font-family="'Liberation Sans', sans-serif" font-size="7.5" font-weight="bold" font-style="normal" fill="#000" text-anchor="start" >b</text>
<text x="88.5" y="98" font-family="'Liberation Sans', sans-serif" font-size="7.5" font-weight="bold" font-style="normal" fill="#000" text-anchor="start" >a</text>
<text x="109" y="85" font-family="'Liberation Sans', sans-serif" font-size="6.5" font-weight="bold" font-style="normal" fill="#000" text-anchor="start" textLength="5" lengthAdjust="spacingAndGlyphs" >m</text>
<text x="106.5" y="95" font-family="'Liberation Sans', sans-serif" font-size="13" font-weight="normal" font-style="normal" fill="#000" text-anchor="start" textLength="9" lengthAdjust="spacingAndGlyphs" >Σ</text>
<text x="106" y="98.5" font-family="'Liberation Sans', sans-serif" font-size="7" font-weight="bold" font-style="normal" fill="#000" text-anchor="start" textLength="10" lengthAdjust="spacingAndGlyphs" >n=1</text>
<text x="132" y="85" font-family="'Liberation Sans', sans-serif" font-size="6.5" font-weight="bold" font-style="normal" fill="#000" text-anchor="start" textLength="5" lengthAdjust="spacingAndGlyphs" >m</text>
<path d="M129 86.500H139M131.500 86.500V94.500M136.500 86.500V94.500" fill="none" stroke="#000" stroke-width="1.3" />
<text x="129" y="98.5" font-family="'Liberation Sans', sans-serif" font-size="7" font-weight="bold" font-style="normal" fill="#000" text-anchor="start" textLength="10" lengthAdjust="spacingAndGlyphs" >n=1</text>
<path d="M159.500 84C158.500 83 157.500 84 157.500 85.500V94.500C157.500 96 156.500 97 155 96" fill="none" stroke="#000" stroke-width="1.3" />
<text x="175" y="95" font-family="'Liberation Sans', sans-serif" font-size="16" font-weight="normal" font-style="normal" fill="#000" text-anchor="start" textLength="11.5" lengthAdjust="spacingAndGlyphs" >Σ</text>
<text x="178.5" y="98.5" font-family="'Liberation Sans', sans-serif" font-size="8" font-weight="bold" font-style="normal" fill="#000" text-anchor="start" >n</text>
<path d="M198 84H209M200.500 84V94M206.500 84V94" fill="none" stroke="#000" stroke-width="1.3" />
<text x="201.5" y="98.5" font-family="'Liberation Sans', sans-serif" font-size="8" font-weight="bold" font-style="normal" fill="#000" text-anchor="start" >n</text>
<text x="221" y="90" font-family="'Liberation Sans', sans-serif" font-size="9.5" font-weight="bold" font-style="normal" fill="#000" text-anchor="start" textLength="11" lengthAdjust="spacingAndGlyphs" >lim</text>
<path d="M220 93.5H225.5M223.5 91.5L225.5 93.5L223.5 95.5" fill="none" stroke="#000" stroke-width="1" />
<text x="227.5" y="97.5" font-family="'Liberation Sans', sans-serif" font-size="9" font-weight="bold" font-style="normal" fill="#000" text-anchor="start" >a</text>
<text x="243" y="90" font-family="'Liberation Sans', sans-serif" font-size="9.5" font-weight="bold" font-style="normal" fill="#000" text-anchor="start" textLength="11" lengthAdjust="spacingAndGlyphs" >lim</text>
<path d="M242 93.5H247.5M245.5 91.5L247.5 93.5L245.5 95.5" fill="none" stroke="#000" stroke-width="1" />
<text x="249.5" y="97.5" font-family="'Liberation Sans', sans-serif" font-size="9" font-weight="bold" font-style="normal" fill="#000" text-anchor="start" >a+</text>
<text x="266" y="90" font-family="'Liberation Sans', sans-serif" font-size="9.5" font-weight="bold" font-style="normal" fill="#000" text-anchor="start" textLength="11" lengthAdjust="spacingAndGlyphs" >lim</text>
<path d="M265 93.5H270.5M268.5 91.5L270.5 93.5L268.5 95.5" fill="none" stroke="#000" stroke-width="1" />
<text x="272.5" y="97.5" font-family="'Liberation Sans', sans-serif" font-size="9" font-weight="bold" font-style="normal" fill="#000" text-anchor="start" >a-</text>
<rect x="308" y="87" width="8" height="2" fill="#000" />
<rect x="308" y="91" width="8" height="2" fill="#000" />
<path d="M338 86.500L331 90.500L338 94.500" fill="none" stroke="#000" stroke-width="1.2" />
<path d="M354.500 86.500L361.500 90.500L354.500 94.500" fill="none" stroke="#000" stroke-width="1.2" />
<path d="M385 84.500L378 88L385 91.500M377.500 94.500H385.500" fill="none" stroke="#000" stroke-width="1.2" />
<path d="M400.500 84.500L407.500 88L400.500 91.500M400 94.500H408.500" fill="none" stroke="#000" stroke-width="1.2" />
<path d="M423.500 88.500H431.500M423.500 92.500H431.500M431.500 85L424 95.500" fill="none" stroke="#000" stroke-width="1.2" />
<path d="M445 89.500H453V93" fill="none" stroke="#000" stroke-width="1.6" />
<path d="M470.500 94.500L473.700 86L477 94.500" fill="none" stroke="#000" stroke-width="1.1" />
<path d="M493.500 86L496.700 94.500L500 86" fill="none" stroke="#000" stroke-width="1.1" />
<circle cx="519.500" cy="89.500" r="5" fill="none" stroke="#000" stroke-width="1.1"/>
<path d="M514.500 89.500H524.500M519.500 84.500V94.500" fill="none" stroke="#000" stroke-width="1.1" />
<rect x="544" y="79" width="22" height="22" fill="url(#dith)" />
<rect x="544" y="79" width="22" height="1" fill="#9C9CCC" />
<rect x="544" y="79" width="1" height="22" fill="#9C9CCC" />
<rect x="544" y="100" width="22" height="1" fill="#FFFFFF" />
<rect x="565" y="79" width="1" height="22" fill="#FFFFFF" />
<rect x="567" y="79" width="22" height="22" fill="url(#dith)" />
<rect x="567" y="79" width="22" height="1" fill="#9C9CCC" />
<rect x="567" y="79" width="1" height="22" fill="#9C9CCC" />
<rect x="567" y="100" width="22" height="1" fill="#FFFFFF" />
<rect x="588" y="79" width="1" height="22" fill="#FFFFFF" />
<rect x="590" y="79" width="22" height="22" fill="url(#dith)" />
<rect x="590" y="79" width="22" height="1" fill="#9C9CCC" />
<rect x="590" y="79" width="1" height="22" fill="#9C9CCC" />
<rect x="590" y="100" width="22" height="1" fill="#FFFFFF" />
<rect x="611" y="79" width="1" height="22" fill="#FFFFFF" />
<rect x="636" y="79" width="22" height="22" fill="url(#dith)" />
<rect x="636" y="79" width="22" height="1" fill="#9C9CCC" />
<rect x="636" y="79" width="1" height="22" fill="#9C9CCC" />
<rect x="636" y="100" width="22" height="1" fill="#FFFFFF" />
<rect x="657" y="79" width="1" height="22" fill="#FFFFFF" />
<rect x="659" y="79" width="22" height="22" fill="url(#dith)" />
<rect x="659" y="79" width="22" height="1" fill="#9C9CCC" />
<rect x="659" y="79" width="1" height="22" fill="#9C9CCC" />
<rect x="659" y="100" width="22" height="1" fill="#FFFFFF" />
<rect x="680" y="79" width="1" height="22" fill="#FFFFFF" />
<rect x="728" y="79" width="22" height="22" fill="url(#dith)" />
<rect x="728" y="79" width="22" height="1" fill="#9C9CCC" />
<rect x="728" y="79" width="1" height="22" fill="#9C9CCC" />
<rect x="728" y="100" width="22" height="1" fill="#FFFFFF" />
<rect x="749" y="79" width="1" height="22" fill="#FFFFFF" />
<rect x="548" y="83" width="15" height="15" fill="#0000B0" stroke="#000060" stroke-width="1"/>
<rect x="547.5" y="83" width="1" height="15" fill="#50E0F0" />
<rect x="550" y="85" width="11" height="2" fill="#50E8E8" />
<rect x="550" y="87" width="11" height="2" fill="#F0F040" />
<rect x="551" y="91" width="2" height="2" fill="#F8F080" />
<rect x="555" y="91" width="2" height="2" fill="#F8F080" />
<rect x="559" y="91" width="2" height="2" fill="#F8F080" />
<rect x="551" y="95" width="2" height="2" fill="#F8F080" />
<rect x="555" y="95" width="2" height="2" fill="#F8F080" />
<rect x="559" y="95" width="2" height="2" fill="#F8F080" />
<path d="M580.500 83V98M573 90.500H588" fill="none" stroke="#000" stroke-width="1.1" />
<path d="M573.500 95C575 84 578.500 84 580.500 90.500C582.500 97 586 97 587.500 86" fill="none" stroke="#F01010" stroke-width="1.3" />
<path d="M598 82.500H595.500V98.500H598M605 82.500H607.500V98.500H605" fill="none" stroke="#000" stroke-width="1.2" />
<rect x="597.5" y="85.0" width="2" height="2" fill="#800000" />
<rect x="601.0" y="85.0" width="2" height="2" fill="#0000A0" />
<rect x="604.5" y="85.0" width="2" height="2" fill="#800000" />
<rect x="597.5" y="89.5" width="2" height="2" fill="#0000A0" />
<rect x="601.0" y="89.5" width="2" height="2" fill="#800000" />
<rect x="604.5" y="89.5" width="2" height="2" fill="#0000A0" />
<rect x="597.5" y="94.0" width="2" height="2" fill="#800000" />
<rect x="601.0" y="94.0" width="2" height="2" fill="#0000A0" />
<rect x="604.5" y="94.0" width="2" height="2" fill="#800000" />
<text x="616" y="94.5" font-family="'Liberation Serif', serif" font-size="12" font-weight="bold" font-style="italic" fill="#000" text-anchor="start" >x</text>
<rect x="624" y="88" width="7" height="2" fill="#1030F0" />
<rect x="624" y="92" width="7" height="2" fill="#1030F0" />
<path d="M645 83.500C643.500 82.500 642.500 83.500 642.500 85V96C642.500 97.500 641.500 98.500 640 97.500" fill="none" stroke="#00008C" stroke-width="1.3" />
<text x="647" y="89" font-family="'Liberation Serif', serif" font-size="8" font-weight="bold" font-style="italic" fill="#800000" text-anchor="start" textLength="8" lengthAdjust="spacingAndGlyphs" >dy</text>
<rect x="647" y="90" width="9" height="1" fill="#000" />
<text x="647" y="98" font-family="'Liberation Serif', serif" font-size="8" font-weight="bold" font-style="italic" fill="#800000" text-anchor="start" textLength="8" lengthAdjust="spacingAndGlyphs" >dx</text>
<path d="M667 86L662.500 89.500L667 93" fill="none" stroke="#F01010" stroke-width="1.6" />
<rect x="670" y="84" width="7" height="2" fill="#1030F0" />
<rect x="670" y="87.5" width="7" height="2" fill="#1030F0" />
<path d="M675.500 82.500L671.500 90.500" fill="none" stroke="#1030F0" stroke-width="1.3" />
<path d="M670.500 91L676.500 93.500L670.500 96M670 98H677" fill="none" stroke="#000" stroke-width="1.1" />
<rect x="686.5" y="82.5" width="6" height="4" fill="#FFFFFF" stroke="#0000A0" stroke-width="1"/>
<path d="M689.500 86.500V90" fill="none" stroke="#F01010" stroke-width="1.2" />
<path d="M689.500 90L693 94L689.500 98L686 94Z" fill="#FFFFFF" stroke="#0000A0" stroke-width="1" />
<path d="M693 94H699.500V84.500H695" fill="none" stroke="#F01010" stroke-width="1.2" />
<path d="M696.500 83L694.500 84.500L696.500 86" fill="none" stroke="#F01010" stroke-width="1.2" />
<text x="707.5" y="95" font-family="'Liberation Serif', serif" font-size="14" font-weight="bold" font-style="italic" fill="#00008C" text-anchor="start" >α</text>
<text x="716" y="95" font-family="'Liberation Serif', serif" font-size="14" font-weight="bold" font-style="italic" fill="#800000" text-anchor="start" >β</text>
<path d="M733 88L740.500 84L748 88L740.500 92Z" fill="#000" stroke="none" stroke-width="1" />
<path d="M736 91V95C738.500 97.500 742.500 97.500 745 95V91L740.500 93.500Z" fill="#000" stroke="none" stroke-width="1" />
<path d="M738 94.500L740.500 96L743 94.500" fill="none" stroke="#DCDCEC" stroke-width="0.8" />
<path d="M747.500 88.500V98" fill="none" stroke="#1030F0" stroke-width="1.4" />
<rect x="9" y="108" width="158" height="20" fill="#FFFFFF" />
<rect x="9" y="108" width="158" height="1" fill="#7474AE" />
<rect x="9" y="108" width="1" height="20" fill="#7474AE" />
<rect x="10" y="109" width="156" height="1" fill="#9C9CCC" />
<rect x="10" y="109" width="1" height="18" fill="#9C9CCC" />
<rect x="9" y="127" width="158" height="1" fill="#FFFFFF" />
<rect x="166" y="108" width="1" height="20" fill="#FFFFFF" />
<rect x="150" y="110" width="15" height="16" fill="#DCDCEC" />
<rect x="150" y="110" width="15" height="1" fill="#FFFFFF" />
<rect x="150" y="110" width="1" height="16" fill="#FFFFFF" />
<rect x="150" y="125" width="15" height="1" fill="#7474AE" />
<rect x="164" y="110" width="1" height="16" fill="#7474AE" />
<path d="M154 116.5H161L157.5 120.0Z" fill="#000" stroke="none" stroke-width="1" />
<text x="13.5" y="122.5" font-family="'Liberation Sans', sans-serif" font-size="11" font-weight="normal" font-style="normal" fill="#000" text-anchor="start" textLength="33" lengthAdjust="spacingAndGlyphs" >Normal</text>
<rect x="169" y="108" width="159" height="20" fill="#FFFFFF" />
<rect x="169" y="108" width="159" height="1" fill="#7474AE" />
<rect x="169" y="108" width="1" height="20" fill="#7474AE" />
<rect x="170" y="109" width="157" height="1" fill="#9C9CCC" />
<rect x="170" y="109" width="1" height="18" fill="#9C9CCC" />
<rect x="169" y="127" width="159" height="1" fill="#FFFFFF" />
<rect x="327" y="108" width="1" height="20" fill="#FFFFFF" />
<rect x="311" y="110" width="15" height="16" fill="#DCDCEC" />
<rect x="311" y="110" width="15" height="1" fill="#FFFFFF" />
<rect x="311" y="110" width="1" height="16" fill="#FFFFFF" />
<rect x="311" y="125" width="15" height="1" fill="#7474AE" />
<rect x="325" y="110" width="1" height="16" fill="#7474AE" />
<path d="M315 116.5H322L318.5 120.0Z" fill="#000" stroke="none" stroke-width="1" />
<text x="173.5" y="122.5" font-family="'Liberation Sans', sans-serif" font-size="11" font-weight="normal" font-style="normal" fill="#000" text-anchor="start" textLength="20.5" lengthAdjust="spacingAndGlyphs" >Arial</text>
<rect x="329" y="108" width="58" height="20" fill="#FFFFFF" />
<rect x="329" y="108" width="58" height="1" fill="#7474AE" />
<rect x="329" y="108" width="1" height="20" fill="#7474AE" />
<rect x="330" y="109" width="56" height="1" fill="#9C9CCC" />
<rect x="330" y="109" width="1" height="18" fill="#9C9CCC" />
<rect x="329" y="127" width="58" height="1" fill="#FFFFFF" />
<rect x="386" y="108" width="1" height="20" fill="#FFFFFF" />
<rect x="370" y="110" width="15" height="16" fill="#DCDCEC" />
<rect x="370" y="110" width="15" height="1" fill="#FFFFFF" />
<rect x="370" y="110" width="1" height="16" fill="#FFFFFF" />
<rect x="370" y="125" width="15" height="1" fill="#7474AE" />
<rect x="384" y="110" width="1" height="16" fill="#7474AE" />
<path d="M374 116.5H381L377.5 120.0Z" fill="#000" stroke="none" stroke-width="1" />
<text x="333.5" y="122.5" font-family="'Liberation Sans', sans-serif" font-size="11" font-weight="normal" font-style="normal" fill="#000" text-anchor="start" textLength="11.5" lengthAdjust="spacingAndGlyphs" >10</text>
<text x="403" y="123" font-family="'Liberation Serif', serif" font-size="12.5" font-weight="bold" font-style="normal" fill="#000" text-anchor="start" textLength="9" lengthAdjust="spacingAndGlyphs" >B</text>
<text x="427.5" y="123" font-family="'Liberation Serif', serif" font-size="12.5" font-weight="bold" font-style="italic" fill="#000" text-anchor="start" textLength="6" lengthAdjust="spacingAndGlyphs" >I</text>
<text x="449" y="122.5" font-family="'Liberation Serif', serif" font-size="11.5" font-weight="bold" font-style="normal" fill="#000" text-anchor="start" textLength="9" lengthAdjust="spacingAndGlyphs" >U</text>
<rect x="449" y="124" width="9" height="1" fill="#000" />
<rect x="474" y="108" width="22" height="22" fill="url(#dith)" />
<rect x="474" y="108" width="22" height="1" fill="#9C9CCC" />
<rect x="474" y="108" width="1" height="22" fill="#9C9CCC" />
<rect x="474" y="129" width="22" height="1" fill="#FFFFFF" />
<rect x="495" y="108" width="1" height="22" fill="#FFFFFF" />
<rect x="479" y="114" width="14" height="1" fill="#000" />
<rect x="479" y="117" width="10" height="1" fill="#000" />
<rect x="479" y="119" width="14" height="1" fill="#000" />
<rect x="479" y="122" width="10" height="1" fill="#000" />
<rect x="479" y="124" width="14" height="1" fill="#000" />
<rect x="501" y="114" width="14" height="1" fill="#000" />
<rect x="503" y="117" width="10" height="1" fill="#000" />
<rect x="501" y="119" width="14" height="1" fill="#000" />
<rect x="503" y="122" width="10" height="1" fill="#000" />
<rect x="501" y="124" width="14" height="1" fill="#000" />
<rect x="524" y="114" width="14" height="1" fill="#000" />
<rect x="528" y="117" width="10" height="1" fill="#000" />
<rect x="524" y="119" width="14" height="1" fill="#000" />
<rect x="528" y="122" width="10" height="1" fill="#000" />
<rect x="524" y="124" width="14" height="1" fill="#000" />
<rect x="555" y="112" width="3" height="3" fill="#0000A0" />
<rect x="560" y="113" width="9" height="1" fill="#000" />
<rect x="584" y="113" width="8" height="1" fill="#000" />
<text x="578" y="116.5" font-family="'Liberation Sans', sans-serif" font-size="6" font-weight="bold" font-style="normal" fill="#0000A0" text-anchor="start" >1</text>
<rect x="555" y="117" width="3" height="3" fill="#0000A0" />
<rect x="560" y="118" width="9" height="1" fill="#000" />
<rect x="584" y="118" width="8" height="1" fill="#000" />
<text x="578" y="121.0" font-family="'Liberation Sans', sans-serif" font-size="6" font-weight="bold" font-style="normal" fill="#0000A0" text-anchor="start" >2</text>
<rect x="555" y="122" width="3" height="3" fill="#0000A0" />
<rect x="560" y="123" width="9" height="1" fill="#000" />
<rect x="584" y="123" width="8" height="1" fill="#000" />
<text x="578" y="125.5" font-family="'Liberation Sans', sans-serif" font-size="6" font-weight="bold" font-style="normal" fill="#0000A0" text-anchor="start" >3</text>
<path d="M613.500 112V125.500H628" fill="none" stroke="#000" stroke-width="1.2" />
<path d="M614 116L627 123" fill="none" stroke="#F01010" stroke-width="1.1" />
<path d="M614.500 124C617 118 619 113 621.500 115.500C623.500 118 625 117 627.500 114" fill="none" stroke="#1030F0" stroke-width="1.1" />
<circle cx="645.500" cy="119.500" r="5" fill="none" stroke="#FFFFFF" stroke-width="1.5"/><circle cx="644.500" cy="118.500" r="5" fill="none" stroke="#9C9CCC" stroke-width="1.8"/>
<path d="M636 118.500H652M644.500 111V126.500" transform="translate(1 1)" fill="none" stroke="#FFFFFF" stroke-width="1.3"/>
<path d="M636 118.500H652M644.500 111V126.500" fill="none" stroke="#9C9CCC" stroke-width="1.3"/>
<path d="M637 126.500C640 119 646 118 650.500 111" transform="translate(1 1)" fill="none" stroke="#FFFFFF" stroke-width="1.2"/>
<path d="M637 126.500C640 119 646 118 650.500 111" fill="none" stroke="#9C9CCC" stroke-width="1.2"/>
<path d="M648 122L652 126.500" transform="translate(1 1)" fill="none" stroke="#FFFFFF" stroke-width="2.2"/>
<path d="M648 122L652 126.500" fill="none" stroke="#9C9CCC" stroke-width="2.2"/>
<path d="M659 119.500H675M666.500 111V127" transform="translate(1 1)" fill="none" stroke="#FFFFFF" stroke-width="1.3"/>
<path d="M659 119.500H675M666.500 111V127" fill="none" stroke="#9C9CCC" stroke-width="1.3"/>
<path d="M674.500 111.500L669 117.500" transform="translate(1 1)" fill="none" stroke="#FFFFFF" stroke-width="3"/>
<path d="M674.500 111.500L669 117.500" fill="none" stroke="#9C9CCC" stroke-width="3"/>
<path d="M660 126.500C664 122 668 119 672 118.500" transform="translate(1 1)" fill="none" stroke="#FFFFFF" stroke-width="1.1"/>
<path d="M660 126.500C664 122 668 119 672 118.500" fill="none" stroke="#9C9CCC" stroke-width="1.1"/>
<path d="M660.500 114L663 116.500M661 125L663.500 122.500M670 122L673 125M662 120L665 123" transform="translate(1 1)" fill="none" stroke="#FFFFFF" stroke-width="1"/>
<path d="M660.500 114L663 116.500M661 125L663.500 122.500M670 122L673 125M662 120L665 123" fill="none" stroke="#9C9CCC" stroke-width="1"/>
<circle cx="689.500" cy="118.500" r="7" fill="#ECECF6" stroke="#000" stroke-width="1.3"/>
<path d="M683 118.500H696" fill="none" stroke="#00A000" stroke-width="1.2" />
<path d="M689.500 112V125" fill="none" stroke="#00A000" stroke-width="1.2" />
<path d="M689.500 118.500C693 117.500 693.500 113.500 690 113C686 112.500 684 117 685.500 121C686.500 123.500 689 125 691.500 124" fill="none" stroke="#F01010" stroke-width="1.2" />
<path d="M705.500 123.500C707 118 710 113 713.500 112H718C720 113.500 721.500 117 721 120L719.500 126L714 121.500Z" fill="#30E8E8" stroke="#101010" stroke-width="0.9" />
<path d="M708 118.500C709.500 115.500 711.500 113 713.500 112.500H718C719.500 113.500 720.500 115.500 721 118L715 116.500Z" fill="#30D030" stroke="none" stroke-width="1" />
<path d="M711 114.500C712 113.500 713 112.700 713.800 112.500H718C719 113.200 719.800 114.500 720.200 115.500L715 114Z" fill="#F0E820" stroke="none" stroke-width="1" />
<path d="M705.500 123.500L709 121L714 121.500L719.500 126" fill="none" stroke="#101010" stroke-width="0.8" />
<rect x="706" y="120" width="2.5" height="2.5" fill="#2040E0" />
<rect x="728.5" y="111.5" width="15" height="15" fill="#FFFFFF" stroke="#000" stroke-width="1.3"/>
<path d="M732 123.500C729 120.500 732 114 737 113.500C742 113 742.500 117 740.500 119.500C738.500 122 735 126 732 123.500Z" fill="none" stroke="#1030D0" stroke-width="1.1" />
<circle cx="734" cy="120.500" r="1.700" fill="none" stroke="#1030D0" stroke-width="1"/><ellipse cx="737.500" cy="116.200" rx="2" ry="1.500" fill="none" stroke="#1030D0" stroke-width="1"/>
<path d="M729 115.500L731.500 112.500M739.500 126L743 121.500" fill="none" stroke="#1030D0" stroke-width="1" />
<path d="M751 125.500V116L753 114H756.500V112.500L758.500 111.500H761.500V117L763.500 118.500H767V124L765 125.500Z" fill="#101010" stroke="none" stroke-width="1" />
<rect x="752" y="116" width="3.5" height="9" fill="#F01818" />
<path d="M752 116L753.500 114.500H756.500L755.500 116Z" fill="#A00000" stroke="none" stroke-width="1" />
<rect x="757" y="114" width="3.5" height="11" fill="#1838F0" />
<path d="M757 114L758.500 112.500H761L760.500 114Z" fill="#20A0A0" stroke="none" stroke-width="1" />
<rect x="760.5" y="113" width="1.2" height="11" fill="#20A0A0" />
<rect x="762" y="119" width="3.2" height="6" fill="#18D018" />
<rect x="765.2" y="118.5" width="1.3" height="6" fill="#008000" />
<path d="M780.500 111V121.500H790.500M780.500 121.500L774.500 126.500" fill="none" stroke="#000" stroke-width="1.2" />
<rect x="781" y="113" width="1.5" height="1" fill="#000" />
<rect x="781" y="115" width="1.5" height="1" fill="#000" />
<rect x="781" y="117" width="1.5" height="1" fill="#000" />
<rect x="781" y="119" width="1.5" height="1" fill="#000" />
<rect x="783" y="122" width="1" height="1.5" fill="#000" />
<rect x="785" y="122" width="1" height="1.5" fill="#000" />
<rect x="787" y="122" width="1" height="1.5" fill="#000" />
<rect x="789" y="122" width="1" height="1.5" fill="#000" />
<path d="M774.5 112.5H778.5M776.5 110.5V114.5" fill="none" stroke="#F01010" stroke-width="1.3" />
<rect x="775.5" y="111.5" width="2" height="2" fill="#F01010" />
<path d="M781.5 113.5H785.5M783.5 111.5V115.5" fill="none" stroke="#F01010" stroke-width="1.3" />
<rect x="782.5" y="112.5" width="2" height="2" fill="#F01010" />
<path d="M773.5 117.5H777.5M775.5 115.5V119.5" fill="none" stroke="#F01010" stroke-width="1.3" />
<rect x="774.5" y="116.5" width="2" height="2" fill="#F01010" />
<path d="M785.5 117.5H789.5M787.5 115.5V119.5" fill="none" stroke="#F01010" stroke-width="1.3" />
<rect x="786.5" y="116.5" width="2" height="2" fill="#F01010" />
<path d="M775.5 121.5H779.5M777.5 119.5V123.5" fill="none" stroke="#F01010" stroke-width="1.3" />
<rect x="776.5" y="120.5" width="2" height="2" fill="#F01010" />
<path d="M780.5 124.5H784.5M782.5 122.5V126.5" fill="none" stroke="#F01010" stroke-width="1.3" />
<rect x="781.5" y="123.5" width="2" height="2" fill="#F01010" />
<path d="M797.500 111V125.500H812" fill="none" stroke="#000" stroke-width="1.3" />
<path d="M803.5 116.5L800.5 113.5" fill="none" stroke="#000" stroke-width="1" />
<path d="M802.2677669529663 113.5H800.5V115.26776695296637" fill="none" stroke="#000" stroke-width="1" />
<path d="M811.5 116.5L808.5 113.5" fill="none" stroke="#000" stroke-width="1" />
<path d="M810.2677669529663 113.5H808.5V115.26776695296637" fill="none" stroke="#000" stroke-width="1" />
<path d="M800.5 122.5L803.5 119.5" fill="none" stroke="#000" stroke-width="1" />
<path d="M801.7322330470337 119.5H803.5V121.26776695296637" fill="none" stroke="#000" stroke-width="1" />
<path d="M808 119.5L811 122.5" fill="none" stroke="#000" stroke-width="1" />
<path d="M809.2322330470337 122.5H811V120.73223304703363" fill="none" stroke="#000" stroke-width="1" />
<path d="M2 294.5H1261" stroke="#C0C0C0" stroke-width="1" stroke-dasharray="3 3" fill="none"/>
<text x="134.5" y="152" font-family="'Liberation Serif', serif" font-size="17" font-weight="normal" font-style="normal" fill="#000" text-anchor="start" textLength="57.5" lengthAdjust="spacingAndGlyphs" >−46.066</text>
<text x="197.5" y="152" font-family="'Liberation Serif', serif" font-size="17" font-weight="normal" font-style="normal" fill="#000" text-anchor="start" textLength="9" lengthAdjust="spacingAndGlyphs" >−</text>
<text x="213.5" y="152" font-family="'Liberation Serif', serif" font-size="17" font-weight="normal" font-style="normal" fill="#000" text-anchor="start" textLength="48" lengthAdjust="spacingAndGlyphs" >53.508</text>
<text x="266" y="152" font-family="'Liberation Serif', serif" font-size="17" font-weight="normal" font-style="normal" fill="#000" text-anchor="start" >·</text>
<text x="275.5" y="152" font-family="'Liberation Serif', serif" font-size="17" font-weight="normal" font-style="normal" fill="#000" text-anchor="start" >i</text>
<text x="134.5" y="181" font-family="'Liberation Serif', serif" font-size="17" font-weight="normal" font-style="normal" fill="#000" text-anchor="start" textLength="57.5" lengthAdjust="spacingAndGlyphs" >−439.29</text>
<text x="197.5" y="181" font-family="'Liberation Serif', serif" font-size="17" font-weight="normal" font-style="normal" fill="#000" text-anchor="start" textLength="9" lengthAdjust="spacingAndGlyphs" >+</text>
<text x="213.5" y="181" font-family="'Liberation Serif', serif" font-size="17" font-weight="normal" font-style="normal" fill="#000" text-anchor="start" textLength="48" lengthAdjust="spacingAndGlyphs" >38.947</text>
<text x="266" y="181" font-family="'Liberation Serif', serif" font-size="17" font-weight="normal" font-style="normal" fill="#000" text-anchor="start" >·</text>
<text x="275.5" y="181" font-family="'Liberation Serif', serif" font-size="17" font-weight="normal" font-style="normal" fill="#000" text-anchor="start" >i</text>
<text x="134.5" y="209" font-family="'Liberation Serif', serif" font-size="17" font-weight="normal" font-style="normal" fill="#000" text-anchor="start" textLength="57.5" lengthAdjust="spacingAndGlyphs" >−46.066</text>
<text x="197.5" y="209" font-family="'Liberation Serif', serif" font-size="17" font-weight="normal" font-style="normal" fill="#000" text-anchor="start" textLength="9" lengthAdjust="spacingAndGlyphs" >+</text>
<text x="213.5" y="209" font-family="'Liberation Serif', serif" font-size="17" font-weight="normal" font-style="normal" fill="#000" text-anchor="start" textLength="48" lengthAdjust="spacingAndGlyphs" >53.508</text>
<text x="266" y="209" font-family="'Liberation Serif', serif" font-size="17" font-weight="normal" font-style="normal" fill="#000" text-anchor="start" >·</text>
<text x="275.5" y="209" font-family="'Liberation Serif', serif" font-size="17" font-weight="normal" font-style="normal" fill="#000" text-anchor="start" >i</text>
<text x="134.5" y="238" font-family="'Liberation Serif', serif" font-size="17" font-weight="normal" font-style="normal" fill="#000" text-anchor="start" textLength="57.5" lengthAdjust="spacingAndGlyphs" >−439.29</text>
<text x="197.5" y="238" font-family="'Liberation Serif', serif" font-size="17" font-weight="normal" font-style="normal" fill="#000" text-anchor="start" textLength="9" lengthAdjust="spacingAndGlyphs" >−</text>
<text x="213.5" y="238" font-family="'Liberation Serif', serif" font-size="17" font-weight="normal" font-style="normal" fill="#000" text-anchor="start" textLength="48" lengthAdjust="spacingAndGlyphs" >38.947</text>
<text x="266" y="238" font-family="'Liberation Serif', serif" font-size="17" font-weight="normal" font-style="normal" fill="#000" text-anchor="start" >·</text>
<text x="275.5" y="238" font-family="'Liberation Serif', serif" font-size="17" font-weight="normal" font-style="normal" fill="#000" text-anchor="start" >i</text>
<text x="88" y="181" font-family="'Liberation Serif', serif" font-size="17" font-weight="normal" font-style="normal" fill="#000" text-anchor="start" >p</text>
<text x="100" y="181" font-family="'Liberation Serif', serif" font-size="17" font-weight="normal" font-style="normal" fill="#000" text-anchor="start" textLength="12.5" lengthAdjust="spacingAndGlyphs" >:=</text>
<text x="388.5" y="181" font-family="'Liberation Serif', serif" font-size="17" font-weight="normal" font-style="normal" fill="#000" text-anchor="start" >n</text>
<text x="401.5" y="181" font-family="'Liberation Serif', serif" font-size="17" font-weight="normal" font-style="normal" fill="#000" text-anchor="start" textLength="12.5" lengthAdjust="spacingAndGlyphs" >:=</text>
<text x="418.5" y="181" font-family="'Liberation Serif', serif" font-size="17" font-weight="normal" font-style="normal" fill="#000" text-anchor="start" textLength="48.5" lengthAdjust="spacingAndGlyphs" >−9.174</text>
<path d="M119.5 135V228C119.5 236 122 240 128 242.5" fill="none" stroke="#000" stroke-width="1.1" />
<path d="M295.5 135V228C295.5 236 293 240 287 242.5" fill="none" stroke="#000" stroke-width="1.1" />
<rect x="194" y="374" width="1" height="261" fill="#00FF00" />
<rect x="265" y="374" width="1" height="261" fill="#00FF00" />
<rect x="335" y="374" width="1" height="261" fill="#00FF00" />
<rect x="405" y="374" width="1" height="261" fill="#00FF00" />
<rect x="476" y="374" width="1" height="261" fill="#00FF00" />
<rect x="547" y="374" width="1" height="261" fill="#00FF00" />
<rect x="617" y="374" width="1" height="261" fill="#00FF00" />
<rect x="687" y="374" width="1" height="261" fill="#00FF00" />
<rect x="757" y="374" width="1" height="261" fill="#00FF00" />
<rect x="194" y="374" width="631" height="1" fill="#00FF00" />
<rect x="194" y="439" width="631" height="1" fill="#00FF00" />
<rect x="194" y="569" width="631" height="1" fill="#00FF00" />
<rect x="194" y="634" width="631" height="1" fill="#00FF00" />
<rect x="194" y="504" width="641" height="1" fill="#000" />
<rect x="829" y="374" width="1" height="261" fill="#000" />
<rect x="194" y="499" width="1" height="6" fill="#000" />
<rect x="265" y="499" width="1" height="10" fill="#000" />
<rect x="335" y="499" width="1" height="10" fill="#000" />
<rect x="405" y="499" width="1" height="10" fill="#000" />
<rect x="476" y="499" width="1" height="10" fill="#000" />
<rect x="547" y="499" width="1" height="10" fill="#000" />
<rect x="617" y="499" width="1" height="10" fill="#000" />
<rect x="687" y="499" width="1" height="10" fill="#000" />
<rect x="757" y="499" width="1" height="10" fill="#000" />
<rect x="824" y="374" width="11" height="1" fill="#000" />
<rect x="824" y="439" width="11" height="1" fill="#000" />
<rect x="824" y="504" width="11" height="1" fill="#000" />
<rect x="824" y="569" width="11" height="1" fill="#000" />
<rect x="824" y="634" width="11" height="1" fill="#000" />
<rect x="183" y="513" width="5" height="1" fill="#000" />
<text x="191" y="520" font-family="'Liberation Serif', serif" font-size="14" font-weight="normal" font-style="normal" fill="#000" text-anchor="start" textLength="17.5" lengthAdjust="spacingAndGlyphs" >450</text>
<rect x="254" y="513" width="5" height="1" fill="#000" />
<text x="262" y="520" font-family="'Liberation Serif', serif" font-size="14" font-weight="normal" font-style="normal" fill="#000" text-anchor="start" textLength="17.5" lengthAdjust="spacingAndGlyphs" >400</text>
<rect x="324" y="513" width="5" height="1" fill="#000" />
<text x="332" y="520" font-family="'Liberation Serif', serif" font-size="14" font-weight="normal" font-style="normal" fill="#000" text-anchor="start" textLength="17.5" lengthAdjust="spacingAndGlyphs" >350</text>
<rect x="394" y="513" width="5" height="1" fill="#000" />
<text x="402" y="520" font-family="'Liberation Serif', serif" font-size="14" font-weight="normal" font-style="normal" fill="#000" text-anchor="start" textLength="17.5" lengthAdjust="spacingAndGlyphs" >300</text>
<rect x="465" y="513" width="5" height="1" fill="#000" />
<text x="473" y="520" font-family="'Liberation Serif', serif" font-size="14" font-weight="normal" font-style="normal" fill="#000" text-anchor="start" textLength="17.5" lengthAdjust="spacingAndGlyphs" >250</text>
<rect x="536" y="513" width="5" height="1" fill="#000" />
<text x="544" y="520" font-family="'Liberation Serif', serif" font-size="14" font-weight="normal" font-style="normal" fill="#000" text-anchor="start" textLength="17.5" lengthAdjust="spacingAndGlyphs" >200</text>
<rect x="606" y="513" width="5" height="1" fill="#000" />
<text x="614" y="520" font-family="'Liberation Serif', serif" font-size="14" font-weight="normal" font-style="normal" fill="#000" text-anchor="start" textLength="17.5" lengthAdjust="spacingAndGlyphs" >150</text>
<rect x="676" y="513" width="5" height="1" fill="#000" />
<text x="684" y="520" font-family="'Liberation Serif', serif" font-size="14" font-weight="normal" font-style="normal" fill="#000" text-anchor="start" textLength="17.5" lengthAdjust="spacingAndGlyphs" >100</text>
<rect x="746" y="513" width="5" height="1" fill="#000" />
<text x="754" y="520" font-family="'Liberation Serif', serif" font-size="14" font-weight="normal" font-style="normal" fill="#000" text-anchor="start" textLength="11.5" lengthAdjust="spacingAndGlyphs" >50</text>
<text x="833" y="520" font-family="'Liberation Serif', serif" font-size="14" font-weight="normal" font-style="normal" fill="#000" text-anchor="start" >0</text>
<text x="805.5" y="381" font-family="'Liberation Serif', serif" font-size="14" font-weight="normal" font-style="normal" fill="#000" text-anchor="start" textLength="16.5" lengthAdjust="spacingAndGlyphs" >100</text>
<text x="812" y="446" font-family="'Liberation Serif', serif" font-size="14" font-weight="normal" font-style="normal" fill="#000" text-anchor="start" textLength="11" lengthAdjust="spacingAndGlyphs" >50</text>
<rect x="803" y="569" width="5" height="1" fill="#000" />
<text x="811" y="576" font-family="'Liberation Serif', serif" font-size="14" font-weight="normal" font-style="normal" fill="#000" text-anchor="start" textLength="11" lengthAdjust="spacingAndGlyphs" >50</text>
<rect x="796" y="634" width="5" height="1" fill="#000" />
<text x="804.5" y="641" font-family="'Liberation Serif', serif" font-size="14" font-weight="normal" font-style="normal" fill="#000" text-anchor="start" textLength="16.5" lengthAdjust="spacingAndGlyphs" >100</text>
<path d="M756.0 425.0L775.0 444.0M756.0 444.0L775.0 425.0" fill="none" stroke="#FF0000" stroke-width="2.6" stroke-linecap="square"/>
<path d="M756.0 564.0L775.0 583.0M756.0 583.0L775.0 564.0" fill="none" stroke="#FF0000" stroke-width="2.6" stroke-linecap="square"/>
<path d="M200.5 444.5L219.5 463.5M200.5 463.5L219.5 444.5" fill="none" stroke="#FF0000" stroke-width="2.6" stroke-linecap="square"/>
<path d="M200.5 545.0L219.5 564.0M200.5 564.0L219.5 545.0" fill="none" stroke="#FF0000" stroke-width="2.6" stroke-linecap="square"/>
<path d="M805.0 495.0L824.0 514.0M805.0 514.0L824.0 495.0" fill="none" stroke="#FF0000" stroke-width="2.6" stroke-linecap="square"/>
<circle cx="818" cy="505" r="9.6" fill="none" stroke="#0000FF" stroke-width="2.6"/>
<text x="118" y="482" font-family="'Liberation Serif', serif" font-size="13.5" font-weight="normal" font-style="normal" fill="#000" text-anchor="start" textLength="27" lengthAdjust="spacingAndGlyphs" >Im(p)</text>
<path d="M115.0 489.0L134.0 508.0M115.0 508.0L134.0 489.0" fill="none" stroke="#FF0000" stroke-width="2.6" stroke-linecap="square"/>
<path d="M141.0 489.0L160.0 508.0M141.0 508.0L160.0 489.0" fill="none" stroke="#FF0000" stroke-width="2.6" stroke-linecap="square"/>
<text x="118" y="521" font-family="'Liberation Serif', serif" font-size="13.5" font-weight="normal" font-style="normal" fill="#000" text-anchor="start" textLength="27" lengthAdjust="spacingAndGlyphs" >Im(n)</text>
<circle cx="125" cy="537.5" r="9.6" fill="none" stroke="#0000FF" stroke-width="2.6"/>
<circle cx="151" cy="537.5" r="9.6" fill="none" stroke="#0000FF" stroke-width="2.6"/>
<text x="479" y="672" font-family="'Liberation Serif', serif" font-size="13" font-weight="normal" font-style="normal" fill="#000" text-anchor="start" textLength="67.5" lengthAdjust="spacingAndGlyphs" >Re(p) ,Re(n)</text>
<rect x="954" y="502" width="11" height="1" fill="#FF0000" />
<rect x="959" y="496" width="1" height="12" fill="#FF0000" />
<rect x="2" y="733" width="1260" height="17" fill="url(#gHTrack)" />
<rect x="2" y="733" width="1260" height="1" fill="#9090C4" />
<rect x="2.5" y="734.5" width="15" height="15" rx="1.5" fill="url(#gBtn)" stroke="#50508E" stroke-width="1"/>
<rect x="3.5" y="735.5" width="13" height="13" rx="1" fill="none" stroke="#FFFFFF" stroke-opacity="0.7" stroke-width="1"/>
<path d="M11.500 737.500L7.500 741.500L11.500 745.500" fill="none" stroke="#1C1C5C" stroke-width="2.2" />
<rect x="20.5" y="734.5" width="15" height="15" rx="1.5" fill="url(#gBtn)" stroke="#50508E" stroke-width="1"/>
<rect x="21.5" y="735.5" width="13" height="13" rx="1" fill="none" stroke="#FFFFFF" stroke-opacity="0.7" stroke-width="1"/>
<rect x="23" y="738" width="1" height="7" fill="#7474B0" />
<rect x="25" y="738" width="1" height="7" fill="#7474B0" />
<rect x="27" y="738" width="1" height="7" fill="#7474B0" />
<rect x="29" y="738" width="1" height="7" fill="#7474B0" />
<rect x="1245.5" y="734.5" width="15" height="15" rx="1.5" fill="url(#gBtn)" stroke="#50508E" stroke-width="1"/>
<rect x="1246.5" y="735.5" width="13" height="13" rx="1" fill="none" stroke="#FFFFFF" stroke-opacity="0.7" stroke-width="1"/>
<path d="M1251 738L1255 742L1251 746" fill="none" stroke="#1C1C5C" stroke-width="2.2" />
<rect x="1261" y="135" width="17" height="599" fill="url(#gVTrack)" />
<rect x="1261" y="135" width="1" height="599" fill="#7070AC" />
<rect x="1262.5" y="135.5" width="15" height="16" rx="1.5" fill="url(#gBtn)" stroke="#50508E" stroke-width="1"/>
<rect x="1263.5" y="136.5" width="13" height="14" rx="1" fill="none" stroke="#FFFFFF" stroke-opacity="0.7" stroke-width="1"/>
<path d="M1266 145.500L1270 141.500L1274 145.500" fill="none" stroke="#1C1C5C" stroke-width="2.2" />
<rect x="1262.5" y="681.5" width="15" height="16" rx="1.5" fill="url(#gBtn)" stroke="#50508E" stroke-width="1"/>
<rect x="1263.5" y="682.5" width="13" height="14" rx="1" fill="none" stroke="#FFFFFF" stroke-opacity="0.7" stroke-width="1"/>
<rect x="1267" y="685" width="7" height="1" fill="#7C7CB8" />
<rect x="1267" y="687" width="7" height="1" fill="#7C7CB8" />
<rect x="1267" y="689" width="7" height="1" fill="#7C7CB8" />
<rect x="1267" y="691" width="7" height="1" fill="#7C7CB8" />
<rect x="1262.5" y="716.5" width="15" height="16" rx="1.5" fill="url(#gBtn)" stroke="#50508E" stroke-width="1"/>
<rect x="1263.5" y="717.5" width="13" height="14" rx="1" fill="none" stroke="#FFFFFF" stroke-opacity="0.7" stroke-width="1"/>
<path d="M1266 722L1270 726L1274 722" fill="none" stroke="#1C1C5C" stroke-width="2.2" />
<rect x="1262" y="733" width="18" height="18" fill="#DCDCEC" />
<rect x="1277" y="135" width="1" height="599" fill="#9090C4" />
<rect x="1278" y="135" width="2" height="616" fill="#DADAEA" />
<rect x="0" y="750" width="1280" height="1" fill="#FFFFFF" />
<rect x="0" y="751" width="1280" height="19" fill="#DCDCEC" />
<text x="2" y="765.5" font-family="'Liberation Sans', sans-serif" font-size="11" font-weight="normal" font-style="normal" fill="#000" text-anchor="start" textLength="60" lengthAdjust="spacingAndGlyphs" >Помощь - F1</text>
<text x="82.5" y="765.5" font-family="'Liberation Sans', sans-serif" font-size="11" font-weight="normal" font-style="normal" fill="#000" text-anchor="start" >.</text>
<rect x="1135" y="754" width="33" height="1" fill="#A4A4D0" />
<rect x="1135" y="754" width="1" height="15" fill="#A4A4D0" />
<rect x="1135" y="768" width="33" height="1" fill="#FFFFFF" />
<rect x="1167" y="754" width="1" height="15" fill="#FFFFFF" />
<rect x="1171" y="754" width="25" height="1" fill="#A4A4D0" />
<rect x="1171" y="754" width="1" height="15" fill="#A4A4D0" />
<rect x="1171" y="768" width="25" height="1" fill="#FFFFFF" />
<rect x="1195" y="754" width="1" height="15" fill="#FFFFFF" />
<rect x="1199" y="754" width="27" height="1" fill="#A4A4D0" />
<rect x="1199" y="754" width="1" height="15" fill="#A4A4D0" />
<rect x="1199" y="768" width="27" height="1" fill="#FFFFFF" />
<rect x="1225" y="754" width="1" height="15" fill="#FFFFFF" />
<rect x="1229" y="754" width="51" height="1" fill="#A4A4D0" />
<rect x="1229" y="754" width="1" height="15" fill="#A4A4D0" />
<rect x="1229" y="768" width="51" height="1" fill="#FFFFFF" />
<rect x="1279" y="754" width="1" height="15" fill="#FFFFFF" />
<text x="1137" y="765.5" font-family="'Liberation Sans', sans-serif" font-size="11" font-weight="normal" font-style="normal" fill="#000" text-anchor="start" textLength="27" lengthAdjust="spacingAndGlyphs" >AUTO</text>
<text x="1231" y="765.5" font-family="'Liberation Sans', sans-serif" font-size="11" font-weight="normal" font-style="normal" fill="#000" text-anchor="start" textLength="32" lengthAdjust="spacingAndGlyphs" >Page 7</text>
<rect x="0" y="770" width="1280" height="30" fill="url(#gTask)" />
<path d="M0 771H78C92 771 97 779 97 786C97 793 92 800 78 800H0Z" fill="url(#gStart)"/>
<path d="M78 771C92 771 97 779 97 786C97 793 92 800 78 800" fill="none" stroke="#34346C" stroke-width="1.2"/>
<path d="M2 773.5H76C86 773.5 91 777 93 781" fill="none" stroke="#B4B4E0" stroke-width="1" stroke-opacity="0.8"/>
<text x="36" y="791.5" font-family="'Liberation Sans', sans-serif" font-size="18" font-weight="bold" font-style="italic" fill="#22224C" text-anchor="start" textLength="36.5" lengthAdjust="spacingAndGlyphs" >пуск</text>
<text x="35" y="790.5" font-family="'Liberation Sans', sans-serif" font-size="18" font-weight="bold" font-style="italic" fill="#FFFFFF" text-anchor="start" textLength="36.5" lengthAdjust="spacingAndGlyphs" >пуск</text>
<path d="M13.5 777.5C16 776 19 776 21 777.5L19.5 783.5C17.5 782 14.5 782 12 783.5Z" fill="#E8602C"/>
<path d="M22 778C24 779.5 27 779.5 29.5 778L28 784C25.500 785.500 22.500 785.500 20.500 784Z" fill="#6CB82C"/>
<path d="M11.700 784.700C14.200 783.200 17.200 783.200 19.200 784.700L17.700 790.700C15.700 789.200 12.700 789.200 10.200 790.700Z" fill="#3C7CE0"/>
<path d="M20.200 785.200C22.200 786.700 25.200 786.700 27.700 785.200L26.200 791.200C23.700 792.700 20.700 792.700 18.700 791.200Z" fill="#F4C020"/>
<rect x="224.5" y="773.5" width="156" height="23" rx="3" fill="url(#gTBtn)" stroke="#363670" stroke-width="1"/>
<rect x="225.5" y="774.5" width="154" height="21" rx="2.5" fill="none" stroke="#D0D0EC" stroke-opacity="0.55" stroke-width="1"/>
<text x="252" y="789" font-family="'Liberation Sans', sans-serif" font-size="11" font-weight="normal" font-style="normal" fill="#000" text-anchor="start" textLength="46" lengthAdjust="spacingAndGlyphs" >ТАУ МОЙ</text>
<path d="M233 780L234.5 778H239L240.5 780H247V790H233Z" fill="#E8B838" stroke="#9C7410" stroke-width="0.8"/>
<path d="M233.8 790L236 783H249L247 790Z" fill="#FCE48C" stroke="#B08818" stroke-width="0.8"/>
<rect x="384.5" y="773.5" width="156" height="23" rx="3" fill="url(#gTBtn)" stroke="#363670" stroke-width="1"/>
<rect x="385.5" y="774.5" width="154" height="21" rx="2.5" fill="none" stroke="#D0D0EC" stroke-opacity="0.55" stroke-width="1"/>
<text x="412" y="789" font-family="'Liberation Sans', sans-serif" font-size="11" font-weight="normal" font-style="normal" fill="#000" text-anchor="start" textLength="63" lengthAdjust="spacingAndGlyphs" >Тау Курсачи</text>
<path d="M393 780L394.5 778H399L400.5 780H407V790H393Z" fill="#E8B838" stroke="#9C7410" stroke-width="0.8"/>
<path d="M393.8 790L396 783H409L407 790Z" fill="#FCE48C" stroke="#B08818" stroke-width="0.8"/>
<rect x="544.5" y="773.5" width="156" height="23" rx="3" fill="url(#gTBtnA)" stroke="#363670" stroke-width="1"/>
<rect x="545.5" y="774.5" width="154" height="21" rx="2.5" fill="none" stroke="#9494C8" stroke-opacity="0.55" stroke-width="1"/>
<text x="572" y="789" font-family="'Liberation Sans', sans-serif" font-size="11" font-weight="normal" font-style="normal" fill="#101030" text-anchor="start" textLength="115" lengthAdjust="spacingAndGlyphs" >Mathcad Professional...</text>
<g transform="translate(560.5 784) scale(1.0) rotate(-18)"><ellipse cx="0" cy="0" rx="5.900" ry="4.600" fill="none" stroke="#181818" stroke-width="4.400"/><path d="M-5.900 0A5.900 4.600 0 0 1 0 -4.600" fill="none" stroke="#48B83C" stroke-width="3.200"/><path d="M0 -4.600A5.900 4.600 0 0 1 5.900 0" fill="none" stroke="#E8A828" stroke-width="3.200"/><path d="M-5.900 0A5.900 4.600 0 0 0 -1 4.550" fill="none" stroke="#D83828" stroke-width="3.200"/><path d="M-1 4.550A5.900 4.600 0 0 0 2.500 4.200" fill="none" stroke="#E8D030" stroke-width="3.200"/><path d="M2.500 4.200A5.900 4.600 0 0 0 5.900 0" fill="none" stroke="#D8C040" stroke-width="2"/></g>
<g transform="translate(560.5 784) scale(1.0)"><path d="M1.500 7.500V3L3.500 5.500L5.500 3V7.500" fill="none" stroke="#101010" stroke-width="1.400"/></g>
<rect x="704.5" y="773.5" width="156" height="23" rx="3" fill="url(#gTBtn)" stroke="#363670" stroke-width="1"/>
<rect x="705.5" y="774.5" width="154" height="21" rx="2.5" fill="none" stroke="#D0D0EC" stroke-opacity="0.55" stroke-width="1"/>
<text x="732" y="789" font-family="'Liberation Sans', sans-serif" font-size="11" font-weight="normal" font-style="normal" fill="#000" text-anchor="start" textLength="113" lengthAdjust="spacingAndGlyphs" >Слотов ПС-465 - Mic...</text>
<path d="M717 777H725L728 780V792H717Z" fill="#FFFFFF" stroke="#8C98B4" stroke-width="0.8"/>
<rect x="722" y="782" width="5" height="1" fill="#B0B8D0" />
<rect x="722" y="784" width="5" height="1" fill="#B0B8D0" />
<rect x="722" y="786" width="5" height="1" fill="#B0B8D0" />
<rect x="722" y="788" width="5" height="1" fill="#B0B8D0" />
<rect x="713" y="778" width="9" height="9" fill="#2C4CA4" />
<text x="713.5" y="786" font-family="'Liberation Sans', sans-serif" font-size="9" font-weight="bold" font-style="normal" fill="#FFFFFF" text-anchor="start" textLength="8" lengthAdjust="spacingAndGlyphs" >W</text>
<rect x="864.5" y="773.5" width="156" height="23" rx="3" fill="url(#gTBtn)" stroke="#363670" stroke-width="1"/>
<rect x="865.5" y="774.5" width="154" height="21" rx="2.5" fill="none" stroke="#D0D0EC" stroke-opacity="0.55" stroke-width="1"/>
<text x="892" y="789" font-family="'Liberation Sans', sans-serif" font-size="11" font-weight="normal" font-style="normal" fill="#000" text-anchor="start" textLength="108" lengthAdjust="spacingAndGlyphs" >Дашуль - Microsoft ...</text>
<path d="M877 777H885L888 780V792H877Z" fill="#FFFFFF" stroke="#8C98B4" stroke-width="0.8"/>
<rect x="882" y="782" width="5" height="1" fill="#B0B8D0" />
<rect x="882" y="784" width="5" height="1" fill="#B0B8D0" />
<rect x="882" y="786" width="5" height="1" fill="#B0B8D0" />
<rect x="882" y="788" width="5" height="1" fill="#B0B8D0" />
<rect x="873" y="778" width="9" height="9" fill="#2C4CA4" />
<text x="873.5" y="786" font-family="'Liberation Sans', sans-serif" font-size="9" font-weight="bold" font-style="normal" fill="#FFFFFF" text-anchor="start" textLength="8" lengthAdjust="spacingAndGlyphs" >W</text>
<rect x="113" y="778" width="6" height="14" fill="#3CA83C" />
<rect x="113" y="778" width="6" height="14" fill="none" stroke="#C8C8C8" stroke-width="1"/>
<rect x="114" y="784" width="4" height="1" fill="#E8E8E8" />
<rect x="116" y="776" width="1" height="2" fill="#D8D8D8" />
<text x="108.5" y="790" font-family="'Liberation Sans', sans-serif" font-size="7" font-weight="bold" font-style="normal" fill="#F0F0F0" text-anchor="start" >q</text>
<text x="119.5" y="790" font-family="'Liberation Sans', sans-serif" font-size="7" font-weight="bold" font-style="normal" fill="#F0F0F0" text-anchor="start" >p</text>
<circle cx="138.200" cy="784" r="7" fill="#F8F8F8" stroke="#E06020" stroke-width="0"/>
<path d="M138.200 777A7 7 0 0 1 145.200 784" fill="none" stroke="#3C9C3C" stroke-width="2.6"/>
<path d="M145.200 784A7 7 0 0 1 138.200 791" fill="none" stroke="#F0B020" stroke-width="2.6"/>
<path d="M138.200 791A7 7 0 0 1 131.200 784" fill="none" stroke="#3868D0" stroke-width="2.6"/>
<path d="M131.200 784A7 7 0 0 1 138.200 777" fill="none" stroke="#E05020" stroke-width="2.6"/>
<path d="M136 780.500L141.500 784L136 787.500Z" fill="#101010"/>
<rect x="154" y="778" width="16" height="15" fill="#C8C8C8" />
<circle cx="160.500" cy="783.500" r="5.500" fill="none" stroke="#1070F0" stroke-width="2.4"/>
<circle cx="164" cy="787" r="5" fill="#F8E020" stroke="#1030E0" stroke-width="1.6"/>
<text x="161" y="790.5" font-family="'Liberation Sans', sans-serif" font-size="9" font-weight="bold" font-style="normal" fill="#1010C0" text-anchor="start" >Я</text>
<path d="M180 779L188 777.500L190 778.500V791.500L182 793L180 792Z" fill="#9CC0F0" stroke="#5C84C8" stroke-width="0.8"/>
<rect x="182" y="780" width="6" height="3" fill="#E4F0FC" />
<rect x="182.0" y="785.0" width="1.4" height="1.4" fill="#F0F4FC" />
<rect x="184.2" y="785.0" width="1.4" height="1.4" fill="#F0F4FC" />
<rect x="186.4" y="785.0" width="1.4" height="1.4" fill="#F0F4FC" />
<rect x="182.0" y="787.3" width="1.4" height="1.4" fill="#F0F4FC" />
<rect x="184.2" y="787.3" width="1.4" height="1.4" fill="#F0F4FC" />
<rect x="186.4" y="787.3" width="1.4" height="1.4" fill="#F0F4FC" />
<rect x="182.0" y="789.6" width="1.4" height="1.4" fill="#F0F4FC" />
<rect x="184.2" y="789.6" width="1.4" height="1.4" fill="#F0F4FC" />
<rect x="186.4" y="789.6" width="1.4" height="1.4" fill="#F0F4FC" />
<rect x="1134" y="777" width="17" height="16" fill="#8C8CC4" />
<text x="1136" y="789" font-family="'Liberation Sans', sans-serif" font-size="11" font-weight="normal" font-style="normal" fill="#000" text-anchor="start" textLength="13" lengthAdjust="spacingAndGlyphs" >EN</text>
<rect x="1169" y="771" width="1" height="29" fill="#38386C" />
<rect x="1170" y="771" width="1" height="29" fill="#8C8CC4" />
<circle cx="1169" cy="785" r="8.500" fill="url(#gRound)" stroke="#3C3C7C" stroke-width="1"/>
<path d="M1171 781L1167 785L1171 789" fill="none" stroke="#1C1C5C" stroke-width="2.2" />
<rect x="1180.8" y="777.8" width="5.500" height="5.500" fill="none" stroke="#E85C20" stroke-width="1.8"/>
<rect x="1187.8" y="780.8" width="5.500" height="5.500" fill="none" stroke="#3C8CE0" stroke-width="1.8"/>
<rect x="1181.8" y="786.8" width="5.500" height="5.500" fill="none" stroke="#F0B020" stroke-width="1.8"/>
<rect x="1188.8" y="787.8" width="5.500" height="5.500" fill="none" stroke="#5CB43C" stroke-width="1.8"/>
<ellipse cx="1206.200" cy="784.500" rx="5.800" ry="8" fill="#1450E8" stroke="#101020" stroke-width="1.2"/>
<path d="M1203 781L1209 787.500L1206 790.500V778.500L1209 781.500L1203 788" fill="none" stroke="#F02020" stroke-width="1.4" />
<rect x="1216" y="780" width="14" height="10" fill="#F4F4F4" />
<rect x="1216" y="780" width="14" height="1" fill="#E04040" />
<rect x="1216" y="782" width="14" height="1" fill="#E04040" />
<rect x="1216" y="784" width="14" height="1" fill="#E04040" />
<rect x="1216" y="786" width="14" height="1" fill="#E04040" />
<rect x="1216" y="788" width="14" height="1" fill="#E04040" />
<rect x="1216" y="780" width="6" height="5" fill="#4858A8" />
<text x="1238.5" y="789" font-family="'Liberation Sans', sans-serif" font-size="11" font-weight="normal" font-style="normal" fill="#000" text-anchor="start" textLength="27.5" lengthAdjust="spacingAndGlyphs" >20:50</text>
<rect x="1089" y="143" width="127" height="191" fill="#6666A6" />
<rect x="1089" y="143" width="127" height="1" fill="#8C8CC2" />
<rect x="1089" y="143" width="1" height="191" fill="#8C8CC2" />
<rect x="1089" y="333" width="127" height="1" fill="#50508E" />
<rect x="1215" y="143" width="1" height="191" fill="#50508E" />
<rect x="1090" y="144" width="125" height="21" fill="url(#gPalT)" />
<rect x="1093" y="165" width="119" height="165" fill="#DCDCEC" />
<text x="1093" y="160" font-family="'Liberation Sans', sans-serif" font-size="11" font-weight="bold" font-style="normal" fill="#FFFFFF" text-anchor="start" textLength="71" lengthAdjust="spacingAndGlyphs" >Арифметика</text>
<rect x="1197.5" y="149.5" width="12" height="12" rx="1" fill="#5C5C9E" stroke="#FFFFFF" stroke-width="1"/>
<path d="M1200.5 152.5L1206.5 158.5M1206.5 152.5L1200.5 158.5" fill="none" stroke="#FFFFFF" stroke-width="2" />
<text x="1111" y="182" font-family="'Liberation Sans', sans-serif" font-size="13" font-weight="normal" font-style="normal" fill="#000" text-anchor="end" >n!</text>
<text x="1129" y="182" font-family="'Liberation Sans', sans-serif" font-size="13" font-weight="normal" font-style="normal" fill="#000" text-anchor="middle" >i</text>
<text x="1144" y="180" font-family="'Liberation Sans', sans-serif" font-size="9" font-weight="bold" font-style="normal" fill="#000" text-anchor="start" textLength="15.5" lengthAdjust="spacingAndGlyphs" >m..n</text>
<path d="M1170.5 172.5L1177.5 179.5M1170.5 179.5L1177.5 172.5" fill="none" stroke="#000000" stroke-width="0.95" />
<text x="1178.5" y="183" font-family="'Liberation Sans', sans-serif" font-size="9" font-weight="bold" font-style="normal" fill="#000" text-anchor="start" >n</text>
<path d="M1192.5 171V182M1202.5 171V182" fill="none" stroke="#000000" stroke-width="1.1" />
<path d="M1194.5 174L1200.5 180M1194.5 180L1200.5 174" fill="none" stroke="#000000" stroke-width="0.95" />
<text x="1112" y="205" font-family="'Liberation Sans', sans-serif" font-size="13" font-weight="normal" font-style="normal" fill="#000" text-anchor="end" >ln</text>
<text x="1123.5" y="205" font-family="'Liberation Sans', sans-serif" font-size="13" font-weight="normal" font-style="normal" fill="#000" text-anchor="start" >e</text>
<text x="1130" y="199" font-family="'Liberation Sans', sans-serif" font-size="9" font-weight="bold" font-style="normal" fill="#000" text-anchor="start" >x</text>
<path d="M1146 197.5L1154 205.5M1146 205.5L1154 197.5" fill="none" stroke="#000000" stroke-width="0.95" />
<text x="1153.5" y="198" font-family="'Liberation Sans', sans-serif" font-size="9" font-weight="bold" font-style="normal" fill="#000" text-anchor="start" >-1</text>
<path d="M1170 197.5L1178 205.5M1170 205.5L1178 197.5" fill="none" stroke="#000000" stroke-width="0.95" />
<text x="1178.5" y="198" font-family="'Liberation Sans', sans-serif" font-size="9" font-weight="bold" font-style="normal" fill="#000" text-anchor="start" >Y</text>
<text x="1191" y="198" font-family="'Liberation Sans', sans-serif" font-size="9" font-weight="bold" font-style="normal" fill="#000" text-anchor="start" >n</text>
<path d="M1196 202L1198.5 206V197H1206V199" fill="none" stroke="#000000" stroke-width="1.2" />
<text x="1113" y="229" font-family="'Liberation Sans', sans-serif" font-size="13" font-weight="normal" font-style="normal" fill="#000" text-anchor="end" >log</text>
<text x="1129" y="229" font-family="'Liberation Sans', sans-serif" font-size="14" font-weight="normal" font-style="normal" fill="#000" text-anchor="middle" >π</text>
<text x="1145.5" y="229" font-family="'Liberation Sans', sans-serif" font-size="14" font-weight="normal" font-style="normal" fill="#000" text-anchor="start" >(</text>
<text x="1154.5" y="229" font-family="'Liberation Sans', sans-serif" font-size="14" font-weight="normal" font-style="normal" fill="#000" text-anchor="start" >)</text>
<path d="M1170 221.5L1178 229.5M1170 229.5L1178 221.5" fill="none" stroke="#000000" stroke-width="0.95" />
<text x="1178.5" y="222" font-family="'Liberation Sans', sans-serif" font-size="9" font-weight="bold" font-style="normal" fill="#000" text-anchor="start" >2</text>
<path d="M1193 226L1195.5 230V220H1203V222.5" fill="none" stroke="#000000" stroke-width="1.2" />
<text x="1114.5" y="252" font-family="'Liberation Sans', sans-serif" font-size="13" font-weight="normal" font-style="normal" fill="#000" text-anchor="end" >tan</text>
<text x="1129.5" y="252" font-family="'Liberation Sans', sans-serif" font-size="13" font-weight="normal" font-style="normal" fill="#000" text-anchor="middle" >7</text>
<text x="1152" y="252" font-family="'Liberation Sans', sans-serif" font-size="13" font-weight="normal" font-style="normal" fill="#000" text-anchor="middle" >8</text>
<text x="1175" y="252" font-family="'Liberation Sans', sans-serif" font-size="13" font-weight="normal" font-style="normal" fill="#000" text-anchor="middle" >9</text>
<path d="M1195 252L1199.5 242" fill="none" stroke="#000000" stroke-width="1.1" />
<text x="1098.5" y="274" font-family="'Liberation Sans', sans-serif" font-size="13" font-weight="normal" font-style="normal" fill="#000" text-anchor="start" textLength="16" lengthAdjust="spacingAndGlyphs" >cos</text>
<text x="1129.5" y="274.5" font-family="'Liberation Sans', sans-serif" font-size="13" font-weight="normal" font-style="normal" fill="#000" text-anchor="middle" >4</text>
<text x="1152" y="274.5" font-family="'Liberation Sans', sans-serif" font-size="13" font-weight="normal" font-style="normal" fill="#000" text-anchor="middle" >5</text>
<text x="1175" y="274.5" font-family="'Liberation Sans', sans-serif" font-size="13" font-weight="normal" font-style="normal" fill="#000" text-anchor="middle" >6</text>
<path d="M1194.0 267.0L1201.0 274.0M1194.0 274.0L1201.0 267.0" fill="none" stroke="#000000" stroke-width="0.95" />
<text x="1098.5" y="297" font-family="'Liberation Sans', sans-serif" font-size="13" font-weight="normal" font-style="normal" fill="#000" text-anchor="start" textLength="15" lengthAdjust="spacingAndGlyphs" >sin</text>
<text x="1129.5" y="297.5" font-family="'Liberation Sans', sans-serif" font-size="13" font-weight="normal" font-style="normal" fill="#000" text-anchor="middle" >1</text>
<text x="1152" y="297.5" font-family="'Liberation Sans', sans-serif" font-size="13" font-weight="normal" font-style="normal" fill="#000" text-anchor="middle" >2</text>
<text x="1175" y="297.5" font-family="'Liberation Sans', sans-serif" font-size="13" font-weight="normal" font-style="normal" fill="#000" text-anchor="middle" >3</text>
<path d="M1193 293H1202M1197.5 288.5V297.5" fill="none" stroke="#000000" stroke-width="1.1" />
<rect x="1099" y="313" width="2" height="2" fill="#000000" />
<rect x="1099" y="317" width="2" height="2" fill="#000000" />
<rect x="1102" y="313.5" width="8" height="1.1" fill="#000000" />
<rect x="1102" y="317.5" width="8" height="1.1" fill="#000000" />
<rect x="1128" y="317" width="2" height="2" fill="#000000" />
<text x="1152" y="320.5" font-family="'Liberation Sans', sans-serif" font-size="13" font-weight="normal" font-style="normal" fill="#000" text-anchor="middle" >0</text>
<rect x="1170" y="315" width="9" height="1.1" fill="#000000" />
<rect x="1193" y="313.5" width="8.5" height="1.1" fill="#000000" />
<rect x="1193" y="317.5" width="8.5" height="1.1" fill="#000000" />
<rect x="1004" y="160" width="104" height="99" fill="#6666A6" />
<rect x="1004" y="160" width="104" height="1" fill="#8C8CC2" />
<rect x="1004" y="160" width="1" height="99" fill="#8C8CC2" />
<rect x="1004" y="258" width="104" height="1" fill="#50508E" />
<rect x="1107" y="160" width="1" height="99" fill="#50508E" />
<rect x="1005" y="161" width="102" height="21" fill="url(#gPalT)" />
<rect x="1008" y="182" width="96" height="73" fill="#DCDCEC" />
<text x="1008" y="177" font-family="'Liberation Sans', sans-serif" font-size="11" font-weight="bold" font-style="normal" fill="#FFFFFF" text-anchor="start" textLength="54" lengthAdjust="spacingAndGlyphs" >Матрицы</text>
<rect x="1089.5" y="166.5" width="12" height="12" rx="1" fill="#5C5C9E" stroke="#FFFFFF" stroke-width="1"/>
<path d="M1092.5 169.5L1098.5 175.5M1098.5 169.5L1092.5 175.5" fill="none" stroke="#FFFFFF" stroke-width="2" />
<path d="M1017 188.500H1014.500V201.500H1017M1025 188.500H1027.500V201.500H1025" fill="none" stroke="#000000" stroke-width="1.1" />
<rect x="1017" y="190.5" width="2" height="2" fill="#000000" />
<rect x="1020" y="190.5" width="2" height="2" fill="#000000" />
<rect x="1023" y="190.5" width="2" height="2" fill="#000000" />
<rect x="1017" y="194.0" width="2" height="2" fill="#000000" />
<rect x="1020" y="194.0" width="2" height="2" fill="#000000" />
<rect x="1023" y="194.0" width="2" height="2" fill="#000000" />
<rect x="1017" y="197.5" width="2" height="2" fill="#000000" />
<rect x="1020" y="197.5" width="2" height="2" fill="#000000" />
<rect x="1023" y="197.5" width="2" height="2" fill="#000000" />
<path d="M1038.5 189.5L1045.5 196.5M1038.5 196.5L1045.5 189.5" fill="none" stroke="#000000" stroke-width="0.95" />
<text x="1047" y="202" font-family="'Liberation Sans', sans-serif" font-size="9" font-weight="bold" font-style="normal" fill="#000" text-anchor="start" >n</text>
<path d="M1061.2 194.2L1068.8 201.8M1061.2 201.8L1068.8 194.2" fill="none" stroke="#000000" stroke-width="0.95" />
<text x="1069" y="195" font-family="'Liberation Sans', sans-serif" font-size="9" font-weight="bold" font-style="normal" fill="#000" text-anchor="start" >-1</text>
<path d="M1084.500 190V202M1095.500 190V202" fill="none" stroke="#000000" stroke-width="1.1" />
<path d="M1087 193L1093 199M1087 199L1093 193" fill="none" stroke="#000000" stroke-width="0.95" />
<path d="M1014 212.0H1028M1024.5 209.0L1028 212.0L1024.5 215.0" fill="none" stroke="#000000" stroke-width="1.1" />
<text x="1013" y="223" font-family="'Liberation Sans', sans-serif" font-size="9.5" font-weight="bold" font-style="normal" fill="#000" text-anchor="start" textLength="15" lengthAdjust="spacingAndGlyphs" >f(M)</text>
<text x="1038" y="222" font-family="'Liberation Mono', monospace" font-size="10" font-weight="bold" font-style="normal" fill="#000" text-anchor="start" >M</text>
<text x="1044" y="216" font-family="'Liberation Sans', sans-serif" font-size="8" font-weight="bold" font-style="normal" fill="#000" text-anchor="start" textLength="7" lengthAdjust="spacingAndGlyphs" >&lt;&gt;</text>
<text x="1063" y="222" font-family="'Liberation Mono', monospace" font-size="10" font-weight="bold" font-style="normal" fill="#000" text-anchor="start" >M</text>
<text x="1069.5" y="216" font-family="'Liberation Sans', sans-serif" font-size="7" font-weight="bold" font-style="normal" fill="#000" text-anchor="start" >T</text>
<text x="1082" y="222" font-family="'Liberation Sans', sans-serif" font-size="9" font-weight="bold" font-style="normal" fill="#000" text-anchor="start" textLength="15.5" lengthAdjust="spacingAndGlyphs" >m..n</text>
<text x="1014" y="245" font-family="'Liberation Mono', monospace" font-size="9" font-weight="bold" font-style="normal" fill="#000" text-anchor="start" textLength="15" lengthAdjust="spacingAndGlyphs" >x·y</text>
<text x="1036" y="245" font-family="'Liberation Mono', monospace" font-size="9" font-weight="bold" font-style="normal" fill="#000" text-anchor="start" textLength="16" lengthAdjust="spacingAndGlyphs" >x×y</text>
<text x="1060" y="246" font-family="'Liberation Sans', sans-serif" font-size="12" font-weight="bold" font-style="normal" fill="#000" text-anchor="start" >Σ</text>
<text x="1068" y="245" font-family="'Liberation Mono', monospace" font-size="9" font-weight="normal" font-style="normal" fill="#000" text-anchor="start" >v</text>
<rect x="1082.5" y="233.5" width="16" height="15" fill="#FFFFFF" stroke="#000" stroke-width="1"/>
<path d="M1084 247L1086 240L1088 244L1089.500 236L1091 243M1086 236V247M1092 243H1097M1092 246H1097" fill="none" stroke="#000000" stroke-width="1" />
<circle cx="1094.500" cy="238" r="1.600" fill="none" stroke="#000" stroke-width="0.9"/>
<rect x="1069" y="339" width="207" height="214" fill="#6666A6" />
<rect x="1069" y="339" width="207" height="1" fill="#8C8CC2" />
<rect x="1069" y="339" width="1" height="214" fill="#8C8CC2" />
<rect x="1069" y="552" width="207" height="1" fill="#50508E" />
<rect x="1275" y="339" width="1" height="214" fill="#50508E" />
<rect x="1070" y="340" width="205" height="21" fill="url(#gPalT)" />
<rect x="1073" y="361" width="199" height="188" fill="#DCDCEC" />
<text x="1073" y="356" font-family="'Liberation Sans', sans-serif" font-size="11" font-weight="bold" font-style="normal" fill="#FFFFFF" text-anchor="start" textLength="51.5" lengthAdjust="spacingAndGlyphs" >Символы</text>
<rect x="1257.5" y="345.5" width="12" height="12" rx="1" fill="#5C5C9E" stroke="#FFFFFF" stroke-width="1"/>
<path d="M1260.5 348.5L1266.5 354.5M1266.5 348.5L1260.5 354.5" fill="none" stroke="#FFFFFF" stroke-width="2" />
<path d="M1102 373.5H1114M1110.5 370.5L1114 373.5L1110.5 376.5" fill="none" stroke="#000000" stroke-width="1.1" />
<rect x="1163" y="372" width="4" height="4" fill="#000000" />
<path d="M1171 373.5H1181M1177.5 370.5L1181 373.5L1177.5 376.5" fill="none" stroke="#000000" stroke-width="1.1" />
<text x="1211.5" y="378" font-family="'Liberation Sans', sans-serif" font-size="12.5" font-weight="normal" font-style="normal" fill="#000" text-anchor="start" textLength="51" lengthAdjust="spacingAndGlyphs" >Modifiers</text>
<text x="1094" y="401" font-family="'Liberation Sans', sans-serif" font-size="12.5" font-weight="normal" font-style="normal" fill="#000" text-anchor="start" textLength="23.5" lengthAdjust="spacingAndGlyphs" >float</text>
<text x="1149.5" y="401" font-family="'Liberation Sans', sans-serif" font-size="12.5" font-weight="normal" font-style="normal" fill="#000" text-anchor="start" textLength="45.5" lengthAdjust="spacingAndGlyphs" >complex</text>
<text x="1214.5" y="401" font-family="'Liberation Sans', sans-serif" font-size="12.5" font-weight="normal" font-style="normal" fill="#000" text-anchor="start" textLength="45" lengthAdjust="spacingAndGlyphs" >assume</text>
<text x="1092.5" y="424" font-family="'Liberation Sans', sans-serif" font-size="12.5" font-weight="normal" font-style="normal" fill="#000" text-anchor="start" textLength="28" lengthAdjust="spacingAndGlyphs" >solve</text>
<text x="1151" y="424" font-family="'Liberation Sans', sans-serif" font-size="12.5" font-weight="normal" font-style="normal" fill="#000" text-anchor="start" textLength="42" lengthAdjust="spacingAndGlyphs" >simplify</text>
<text x="1210.5" y="424" font-family="'Liberation Sans', sans-serif" font-size="12.5" font-weight="normal" font-style="normal" fill="#000" text-anchor="start" textLength="52.5" lengthAdjust="spacingAndGlyphs" >substitute</text>
<text x="1091" y="447" font-family="'Liberation Sans', sans-serif" font-size="12.5" font-weight="normal" font-style="normal" fill="#000" text-anchor="start" textLength="30" lengthAdjust="spacingAndGlyphs" >factor</text>
<text x="1152.5" y="447" font-family="'Liberation Sans', sans-serif" font-size="12.5" font-weight="normal" font-style="normal" fill="#000" text-anchor="start" textLength="39" lengthAdjust="spacingAndGlyphs" >expand</text>
<text x="1218.5" y="447" font-family="'Liberation Sans', sans-serif" font-size="12.5" font-weight="normal" font-style="normal" fill="#000" text-anchor="start" textLength="31.5" lengthAdjust="spacingAndGlyphs" >coeffs</text>
<text x="1088" y="470" font-family="'Liberation Sans', sans-serif" font-size="12.5" font-weight="normal" font-style="normal" fill="#000" text-anchor="start" textLength="35" lengthAdjust="spacingAndGlyphs" >collect</text>
<text x="1152.5" y="470" font-family="'Liberation Sans', sans-serif" font-size="12.5" font-weight="normal" font-style="normal" fill="#000" text-anchor="start" textLength="33.5" lengthAdjust="spacingAndGlyphs" >series</text>
<text x="1217" y="470" font-family="'Liberation Sans', sans-serif" font-size="12.5" font-weight="normal" font-style="normal" fill="#000" text-anchor="start" textLength="38.5" lengthAdjust="spacingAndGlyphs" >parfrac</text>
<text x="1089.5" y="493" font-family="'Liberation Sans', sans-serif" font-size="12.5" font-weight="normal" font-style="normal" fill="#000" text-anchor="start" textLength="34.5" lengthAdjust="spacingAndGlyphs" >fourier</text>
<text x="1150.5" y="493" font-family="'Liberation Sans', sans-serif" font-size="12.5" font-weight="normal" font-style="normal" fill="#000" text-anchor="start" textLength="39" lengthAdjust="spacingAndGlyphs" >laplace</text>
<text x="1221.5" y="493" font-family="'Liberation Sans', sans-serif" font-size="12.5" font-weight="normal" font-style="normal" fill="#000" text-anchor="start" textLength="32" lengthAdjust="spacingAndGlyphs" >ztrans</text>
<text x="1082.5" y="516" font-family="'Liberation Sans', sans-serif" font-size="12.5" font-weight="normal" font-style="normal" fill="#000" text-anchor="start" textLength="49.5" lengthAdjust="spacingAndGlyphs" >invfourier</text>
<text x="1145.5" y="516" font-family="'Liberation Sans', sans-serif" font-size="12.5" font-weight="normal" font-style="normal" fill="#000" text-anchor="start" textLength="54" lengthAdjust="spacingAndGlyphs" >invlaplace</text>
<text x="1213.5" y="516" font-family="'Liberation Sans', sans-serif" font-size="12.5" font-weight="normal" font-style="normal" fill="#000" text-anchor="start" textLength="47" lengthAdjust="spacingAndGlyphs" >invztrans</text>
<text x="1093.5" y="539" font-family="'Liberation Mono', monospace" font-size="10" font-weight="bold" font-style="normal" fill="#000" text-anchor="start" >M</text>
<text x="1101" y="533" font-family="'Liberation Sans', sans-serif" font-size="7" font-weight="bold" font-style="normal" fill="#000" text-anchor="start" >T</text>
<path d="M1111 535.0H1121.5M1118.0 532.0L1121.5 535.0L1118.0 538.0" fill="none" stroke="#000000" stroke-width="1.1" />
<text x="1158.5" y="539" font-family="'Liberation Mono', monospace" font-size="10" font-weight="bold" font-style="normal" fill="#000" text-anchor="start" >M</text>
<text x="1165.5" y="533" font-family="'Liberation Sans', sans-serif" font-size="7.5" font-weight="bold" font-style="normal" fill="#000" text-anchor="start" >-1</text>
<path d="M1176 535.0H1186M1182.5 532.0L1186 535.0L1182.5 538.0" fill="none" stroke="#000000" stroke-width="1.1" />
<path d="M1222.500 529V541M1235 529V541" fill="none" stroke="#000000" stroke-width="1.1" />
<text x="1225.5" y="539" font-family="'Liberation Mono', monospace" font-size="10" font-weight="bold" font-style="normal" fill="#000" text-anchor="start" >M</text>
<path d="M1243 535.0H1253M1249.5 532.0L1253 535.0L1249.5 538.0" fill="none" stroke="#000000" stroke-width="1.1" />
</svg>
</body></html>
